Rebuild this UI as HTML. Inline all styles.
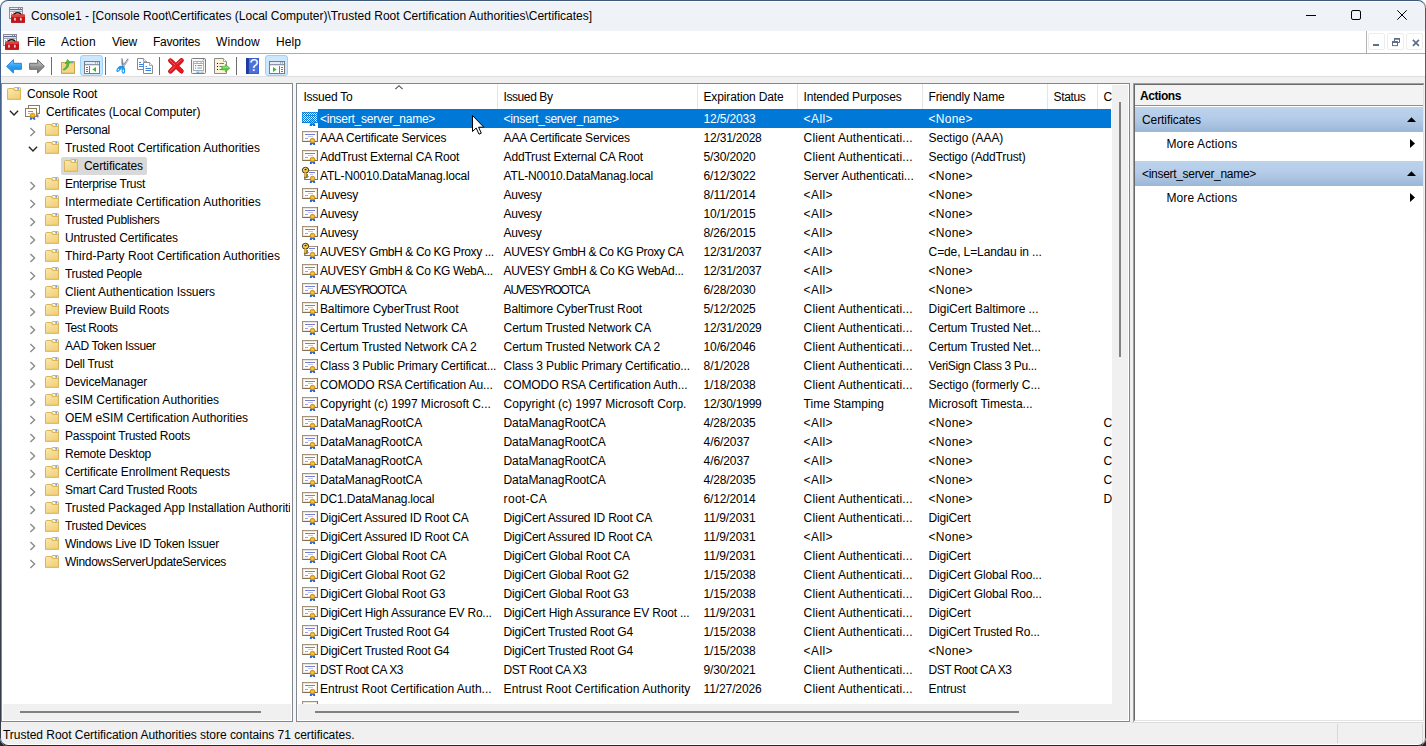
<!DOCTYPE html><html lang="en"><head><meta charset="utf-8"><title>Console1</title><style>
html,body{margin:0;padding:0}
body{width:1426px;height:746px;overflow:hidden;background:#fff;position:relative;font:12px/19px "Liberation Sans",sans-serif;color:#000}
#win{position:absolute;left:0;top:0;width:1426px;height:746px;overflow:hidden;border-radius:8px;background:#f0f0f0}
#frame{position:absolute;left:0;top:0;width:1424px;height:744px;border:1px solid;border-color:#3d5878 #857c7a #26272c #566a8c;border-radius:8px;z-index:50}
.t{position:absolute;white-space:pre;line-height:19px;height:19px}
.i{position:absolute;overflow:visible}
.b{position:absolute}
.w{color:#fff}
</style></head><body>
<div style="position:absolute;left:0;top:700px;width:1426px;height:46px;background:#25272c"></div>
<div id="win">
<div class="b" style="left:0px;top:0px;width:1426px;height:31px;background:#eff3f8;"></div>
<div class="b" style="left:0px;top:1px;width:1426px;height:1px;background:#fafdff;"></div>
<svg class="i" style="left:9px;top:7px" width="16" height="16" viewBox="0 0 16 16" ><rect x="0.5" y="0.5" width="13" height="11" fill="#fff" stroke="#8a8d94"/><path d="M1 1.5 H13" stroke="#e6eaf3"/><rect x="9" y="1" width="1" height="1" fill="#7c89a8"/><rect x="11" y="1" width="1" height="1" fill="#7c89a8"/><path d="M1 2.5 H13" stroke="#5d6d90"/><path d="M1 3.5 H13" stroke="#d9deea"/><path d="M1 4.5 H13" stroke="#a3a8b4"/><path d="M4.5 5 V11" stroke="#8a8d94" stroke-width="0.7"/><rect x="2" y="6" width="1" height="1" fill="#9aa4bd"/><path d="M4.8 9.5 Q4.8 5.8 8.6 5.8 Q12.4 5.8 12.4 9.5" fill="none" stroke="#1c1c1c" stroke-width="1.5"/><rect x="2" y="7.6" width="14" height="8.2" rx="0.9" fill="#c3151a"/><rect x="2" y="7.6" width="14" height="2.4" rx="0.9" fill="#df403b"/><path d="M2.3 15.5 H15.7" stroke="#a30d12" stroke-width="0.6"/><rect x="5.2" y="10.8" width="1.5" height="2.8" fill="#e6e6e6"/><rect x="11.1" y="10.8" width="1.5" height="2.8" fill="#e6e6e6"/></svg>
<span class="t" style="left:31px;top:7px;letter-spacing:-0.007px;">Console1 - [Console Root\Certificates (Local Computer)\Trusted Root Certification Authorities\Certificates]</span>
<svg class="i" style="left:1306px;top:15px" width="10" height="1" viewBox="0 0 10 1" ><rect width="10" height="1" fill="#000"/></svg>
<svg class="i" style="left:1351px;top:10px" width="10" height="10" viewBox="0 0 10 10" ><rect x="0.5" y="0.5" width="9" height="9" rx="1.5" fill="none" stroke="#000"/></svg>
<svg class="i" style="left:1397px;top:10px" width="10" height="10" viewBox="0 0 10 10" ><path d="M0.3 0.3 L9.7 9.7 M9.7 0.3 L0.3 9.7" stroke="#000" stroke-width="1"/></svg>
<div class="b" style="left:0px;top:31px;width:1426px;height:22px;background:#fff;"></div>
<div class="b" style="left:0px;top:53px;width:1426px;height:1px;background:#adadad;"></div>
<svg class="i" style="left:3px;top:34px" width="16" height="16" viewBox="0 0 16 16" ><rect x="0.5" y="0.5" width="13" height="11" fill="#fff" stroke="#8a8d94"/><path d="M1 1.5 H13" stroke="#e6eaf3"/><rect x="9" y="1" width="1" height="1" fill="#7c89a8"/><rect x="11" y="1" width="1" height="1" fill="#7c89a8"/><path d="M1 2.5 H13" stroke="#5d6d90"/><path d="M1 3.5 H13" stroke="#d9deea"/><path d="M1 4.5 H13" stroke="#a3a8b4"/><path d="M4.5 5 V11" stroke="#8a8d94" stroke-width="0.7"/><rect x="2" y="6" width="1" height="1" fill="#9aa4bd"/><path d="M4.8 9.5 Q4.8 5.8 8.6 5.8 Q12.4 5.8 12.4 9.5" fill="none" stroke="#1c1c1c" stroke-width="1.5"/><rect x="2" y="7.6" width="14" height="8.2" rx="0.9" fill="#c3151a"/><rect x="2" y="7.6" width="14" height="2.4" rx="0.9" fill="#df403b"/><path d="M2.3 15.5 H15.7" stroke="#a30d12" stroke-width="0.6"/><rect x="5.2" y="10.8" width="1.5" height="2.8" fill="#e6e6e6"/><rect x="11.1" y="10.8" width="1.5" height="2.8" fill="#e6e6e6"/></svg>
<span class="t" style="left:27px;top:33px;letter-spacing:-0.336px;">File</span>
<span class="t" style="left:61px;top:33px;letter-spacing:0.273px;">Action</span>
<span class="t" style="left:112px;top:33px;letter-spacing:-0.199px;">View</span>
<span class="t" style="left:153px;top:33px;letter-spacing:-0.262px;">Favorites</span>
<span class="t" style="left:216px;top:33px;letter-spacing:0.219px;">Window</span>
<span class="t" style="left:276px;top:33px;letter-spacing:0.078px;">Help</span>
<div class="b" style="left:1366px;top:31px;width:1px;height:22px;background:#b4b4b4;"></div>
<div class="b" style="left:1368px;top:33px;width:15px;height:15px;background:#fff;border:1px solid #ededed;border-radius:2px;"></div>
<div class="b" style="left:1387px;top:33px;width:15px;height:15px;background:#fff;border:1px solid #ededed;border-radius:2px;"></div>
<div class="b" style="left:1406px;top:33px;width:15px;height:15px;background:#fff;border:1px solid #ededed;border-radius:2px;"></div>
<svg class="i" style="left:1373px;top:44px" width="6" height="2" viewBox="0 0 6 2" ><rect width="6" height="2" fill="#5d7089"/></svg>
<svg class="i" style="left:1392px;top:38px" width="9" height="9" viewBox="0 0 9 9" ><path d="M2.5 3 V0.9 H7.5 V4.5 H6" fill="none" stroke="#5d7089" stroke-width="1"/><rect x="2" y="0" width="6" height="1.6" fill="#5d7089"/><rect x="0.5" y="3.6" width="5" height="4" fill="#fff" stroke="#5d7089" stroke-width="1"/><rect x="0" y="3.1" width="6" height="1.9" fill="#5d7089"/></svg>
<svg class="i" style="left:1411.6px;top:38.6px" width="8" height="8" viewBox="0 0 8 8" ><path d="M0.9 0.9 L6.9 6.9 M6.9 0.9 L0.9 6.9" stroke="#5d7089" stroke-width="1.7"/></svg>
<div class="b" style="left:0px;top:54px;width:1426px;height:22px;background:#fff;"></div>
<div class="b" style="left:80px;top:55px;width:21px;height:19px;background:#cce8ff;border:1px solid #99d1ff;border-radius:3px;"></div>
<div class="b" style="left:265px;top:55px;width:21px;height:19px;background:#cce8ff;border:1px solid #99d1ff;border-radius:3px;"></div>
<div class="b" style="left:51px;top:57px;width:1px;height:18px;background:#6d6d6d;"></div>
<div class="b" style="left:105px;top:57px;width:1px;height:18px;background:#6d6d6d;"></div>
<div class="b" style="left:159px;top:57px;width:1px;height:18px;background:#6d6d6d;"></div>
<div class="b" style="left:236px;top:57px;width:1px;height:18px;background:#6d6d6d;"></div>
<svg class="i" style="left:6px;top:58px" width="16" height="16" viewBox="0 0 16 16" ><linearGradient id="gb" x1="0" y1="0" x2="0" y2="1"><stop offset="0" stop-color="#8ad6fb"/><stop offset="0.5" stop-color="#2d9ff2"/><stop offset="1" stop-color="#1c84dc"/></linearGradient><path d="M0.6 8.3 L7.4 1.6 V5.3 H15.4 V11.3 H7.4 V15 Z" fill="url(#gb)" stroke="#2b83d6" stroke-width="1" stroke-linejoin="round"/></svg>
<svg class="i" style="left:29px;top:58px" width="16" height="16" viewBox="0 0 16 16" ><linearGradient id="gg" x1="0" y1="0" x2="0" y2="1"><stop offset="0" stop-color="#c4c4c4"/><stop offset="0.45" stop-color="#a2a2a2"/><stop offset="0.55" stop-color="#8c8c8c"/><stop offset="1" stop-color="#848484"/></linearGradient><path d="M15.4 8.3 L8.6 1.6 V5.3 H0.6 V11.3 H8.6 V15 Z" fill="url(#gg)" stroke="#6c6c6c" stroke-width="1" stroke-linejoin="round"/></svg>
<svg class="i" style="left:60px;top:58px" width="16" height="16" viewBox="0 0 16 16" ><path d="M1.5 4.5 H9 L10 3.5 H14.5 V15.5 H1.5 Z" fill="#f3d78a" stroke="#c9a24c"/><rect x="11" y="4.2" width="2.5" height="1" fill="#4a90e2"/><path d="M2 15 H14" stroke="#d9b45a"/><path d="M3.2 11.2 Q7 9.5 7.2 5.2 L5.2 5.6 L7.6 1.4 L10.6 5 L8.8 5 Q9 10.5 3.8 12.2 Z" fill="#4cc23a" stroke="#2f9a22" stroke-width="0.6" stroke-linejoin="round"/></svg>
<svg class="i" style="left:84px;top:58px" width="16" height="16" viewBox="0 0 16 16" ><rect x="0.5" y="3.5" width="15" height="12" fill="#fff" stroke="#7b7b7b"/><rect x="1" y="4" width="14" height="2" fill="#e8ebf2"/><path d="M1 6.5 H15" stroke="#8e96a8"/><path d="M1 7.5 H15" stroke="#dfe2ea"/><rect x="11" y="4.4" width="1" height="1" fill="#6d7c9c"/><rect x="13" y="4.4" width="1" height="1" fill="#6d7c9c"/><path d="M5.5 8 V15" stroke="#7b7b7b"/><path d="M2 9.5 H4 M2 11.5 H4 M2 13.5 H4" stroke="#3f7fd6"/><path d="M12 9 L8.4 11.5 L12 14 Z" fill="#3fb52d"/></svg>
<svg class="i" style="left:114px;top:58px" width="16" height="16" viewBox="0 0 16 16" ><path d="M7.9 0.3 L10 8.4 L8.7 9.6 L7.8 6 Z" fill="#8d96a0" stroke="#59616a" stroke-width="0.5"/><path d="M13.9 0.6 L14.1 2.2 L9.2 10 L7.7 9.1 Z" fill="#d9dfe6" stroke="#76808a" stroke-width="0.5"/><path d="M13.5 1.2 L9.8 7.2" stroke="#2a2a2a" stroke-width="0.6" stroke-dasharray="0.7 0.9"/><ellipse cx="5" cy="10.9" rx="1.75" ry="3.5" fill="#1e9bf0" transform="rotate(38 5 10.9)"/><ellipse cx="9.3" cy="11.9" rx="1.8" ry="3.9" fill="#1e9bf0" transform="rotate(-4 9.3 11.9)"/><ellipse cx="4.4" cy="11.7" rx="0.55" ry="1.1" fill="#fff" transform="rotate(38 4.4 11.7)"/><ellipse cx="9.3" cy="13" rx="0.6" ry="1.4" fill="#fff" transform="rotate(-4 9.3 13)"/><path d="M6.6 9.2 L8.6 8.4" stroke="#1a7fd0" stroke-width="1.2"/></svg>
<svg class="i" style="left:137px;top:58px" width="16" height="16" viewBox="0 0 16 16" ><path d="M0.5 0.5 H6.5 L9.5 3.5 V11.5 H0.5 Z" fill="#fff" stroke="#8a8a8a"/><path d="M6.5 0.5 V3.5 H9.5" fill="#f4f4f4" stroke="#8a8a8a" stroke-width="0.7"/><path d="M2 4.5 H4 M2 6.5 H6 M2 8.5 H6" stroke="#3f7fd6"/><path d="M6.5 4.5 H12.5 L15.5 7.5 V15.5 H6.5 Z" fill="#fff" stroke="#8a8a8a"/><path d="M12.5 4.5 V7.5 H15.5" fill="#f4f4f4" stroke="#8a8a8a" stroke-width="0.7"/><path d="M8.5 8.5 H10 M8.5 10.5 H14 M8.5 12.5 H14" stroke="#3f7fd6"/></svg>
<svg class="i" style="left:168px;top:58px" width="16" height="16" viewBox="0 0 16 16" ><path d="M2.4 2.6 L13.4 13.2 M13.5 2.4 L2.4 13.3" stroke="#b9090f" stroke-width="4.6" stroke-linecap="round"/><path d="M2.4 2.5 L13.4 13.1 M13.5 2.3 L2.4 13.2" stroke="#e61920" stroke-width="3.5" stroke-linecap="round"/><path d="M1.9 2.1 L7 7 M13 1.8 L9.2 5.6 M6.4 9 L2 13.2" stroke="#f2696c" stroke-width="0.9" stroke-linecap="round"/></svg>
<svg class="i" style="left:191px;top:58px" width="16" height="16" viewBox="0 0 16 16" ><rect x="0.5" y="0.5" width="14" height="15" rx="1" fill="#f7f7f7" stroke="#7d7d7d"/><rect x="2.5" y="3.5" width="10" height="9" fill="#fff" stroke="#a8adbd"/><path d="M2.5 5.5 H12.5" stroke="#a8adbd"/><path d="M6 3.5 V5.5 M10 3.5 V5.5" stroke="#a8adbd"/><rect x="4" y="7" width="1.2" height="1.2" fill="#1e9bf0"/><rect x="4" y="9.6" width="1.2" height="1" fill="#8a8a8a"/><path d="M6.5 7.6 H11 M6.5 10 H11" stroke="#8a8a8a"/><rect x="5.5" y="13.6" width="3" height="1.2" fill="#28b4f0"/><rect x="9.5" y="13.6" width="3" height="1.2" fill="#b8b8b8"/><path d="M12 1.2 L13.2 2.4 M13.2 1.2 L12 2.4" stroke="#4a64a8" stroke-width="0.7"/></svg>
<svg class="i" style="left:214px;top:58px" width="16" height="16" viewBox="0 0 16 16" ><path d="M0.5 0.5 H9.5 L12.5 3.5 V15.5 H0.5 Z" fill="#fbf3d4" stroke="#8a8a8a"/><path d="M9.5 0.5 V3.5 H12.5" fill="#fff" stroke="#8a8a8a" stroke-width="0.7"/><rect x="3" y="5" width="1" height="1" fill="#111"/><rect x="3" y="8" width="1" height="1" fill="#111"/><rect x="3" y="11" width="1" height="1" fill="#111"/><path d="M5.5 5.5 H10 M5.5 8.5 H8 M5.5 11.5 H9" stroke="#6a62b8" stroke-width="0.9"/><path d="M7.8 8.6 H11.4 V6.4 L15.8 10.2 L11.4 14 V11.8 H7.8 Z" fill="#56cc40" stroke="#35a524" stroke-width="0.6" stroke-linejoin="round"/><path d="M8.6 9.6 H12.2 V8.4 L14.2 10.1" stroke="#b6f0a6" stroke-width="0.7" fill="none"/></svg>
<svg class="i" style="left:246px;top:58px" width="13" height="16" viewBox="0 0 13 16" ><rect x="0" y="0" width="13" height="16" fill="#3a5fd0"/><rect x="0" y="0" width="2.8" height="16" fill="#1f3b9c"/><rect x="3" y="1" width="9" height="14" fill="#5b7fe0" opacity="0.55"/></svg>
<svg class="i" style="left:269px;top:58px" width="16" height="16" viewBox="0 0 16 16" ><rect x="0.5" y="3.5" width="15" height="12" fill="#fff" stroke="#7b7b7b"/><rect x="1" y="4" width="14" height="2" fill="#e8ebf2"/><path d="M1 6.5 H15" stroke="#8e96a8"/><path d="M1 7.5 H15" stroke="#dfe2ea"/><rect x="11" y="4.4" width="1" height="1" fill="#6d7c9c"/><rect x="13" y="4.4" width="1" height="1" fill="#6d7c9c"/><path d="M10.5 8 V15" stroke="#7b7b7b"/><path d="M12 9.5 H14 M12 11.5 H14 M12 13.5 H14" stroke="#3f7fd6"/><path d="M4 9 L7.6 11.5 L4 14 Z" fill="#3fb52d"/></svg>
<span class="t w" style="left:249.5px;top:56px;font-size:16px;line-height:19px">?</span>
<div class="b" style="left:0px;top:76px;width:1426px;height:1px;background:#dedede;"></div>
<div class="b" style="left:1px;top:83px;width:290px;height:638px;background:#fff;border:1px solid #828790;border-bottom:none;"></div>
<div class="b" style="left:61px;top:157px;width:86px;height:18px;background:#d9d9d9;border-radius:2px;"></div>
<svg class="i" style="left:7px;top:87px" width="14" height="13" viewBox="0 0 14 13" ><linearGradient id="fg" x1="0" y1="0" x2="0.6" y2="1"><stop offset="0" stop-color="#fbe9ad"/><stop offset="1" stop-color="#f1d07a"/></linearGradient><path d="M0.5 2.5 Q0.5 1.5 1.5 1.5 H6 L7.5 3.5 H13.5 V12.5 H0.5 Z" fill="url(#fg)" stroke="#d8b45c"/><path d="M6.6 1.2 Q7 0.5 8 0.5 H12.6 Q13.5 0.5 13.5 1.5 V3.5 H7.6 Z" fill="#fbeab0" stroke="#d9b55c"/><rect x="8.6" y="1.2" width="3.2" height="1.3" fill="#fff"/><rect x="10.3" y="1.2" width="1.7" height="1.3" fill="#3f8ce0"/><path d="M1 12 H13" stroke="#e8c568" /></svg>
<span class="t" style="left:27px;top:85px;letter-spacing:-0.227px;">Console Root</span>
<svg class="i" style="left:8.899999999999999px;top:108.7px" width="10" height="8" viewBox="0 0 10 8" ><path d="M0.9 1.7 L5 5.9 L9.1 1.7" fill="none" stroke="#262626" stroke-width="1.4"/></svg>
<svg class="i" style="left:25px;top:105.0px" width="16" height="16" viewBox="0 0 16 16" ><rect x="3.5" y="0.5" width="11" height="8" fill="#fff" stroke="#907a5e"/><rect x="0.5" y="3.5" width="11" height="8" fill="#fff" stroke="#907a5e"/><path d="M3 6.5 H8" stroke="#7f87d8"/><path d="M3 8.5 H5" stroke="#a9afe6"/><rect x="12" y="7.6" width="1.3" height="2.2" fill="#e9a617"/><rect x="12.2" y="9.8" width="1.2" height="2.6" fill="#1f63e0"/><path d="M5.3 11.6 L4.9 14.7 H6.6 L7.6 13.2 L8.6 14.7 H10.3 L9.9 11.6 Z" fill="#1f63e0"/><circle cx="7.6" cy="10.5" r="2.4" fill="#e9a617" stroke="#c98a10" stroke-width="0.6"/><path d="M6.6 9.8 L7.6 11 L8.6 9.8" stroke="#fbd75e" stroke-width="0.9" fill="none"/></svg>
<span class="t" style="left:46px;top:103px;letter-spacing:-0.054px;">Certificates (Local Computer)</span>
<svg class="i" style="left:28.5px;top:126.5px" width="8" height="10" viewBox="0 0 8 10" ><path d="M1.4 0.9 L5.6 5 L1.4 9.1" fill="none" stroke="#8b8b8b" stroke-width="1.4"/></svg>
<svg class="i" style="left:45px;top:123px" width="14" height="13" viewBox="0 0 14 13" ><linearGradient id="fg" x1="0" y1="0" x2="0.6" y2="1"><stop offset="0" stop-color="#fbe9ad"/><stop offset="1" stop-color="#f1d07a"/></linearGradient><path d="M0.5 2.5 Q0.5 1.5 1.5 1.5 H6 L7.5 3.5 H13.5 V12.5 H0.5 Z" fill="url(#fg)" stroke="#d8b45c"/><path d="M6.6 1.2 Q7 0.5 8 0.5 H12.6 Q13.5 0.5 13.5 1.5 V3.5 H7.6 Z" fill="#fbeab0" stroke="#d9b55c"/><rect x="8.6" y="1.2" width="3.2" height="1.3" fill="#fff"/><rect x="10.3" y="1.2" width="1.7" height="1.3" fill="#3f8ce0"/><path d="M1 12 H13" stroke="#e8c568" /></svg>
<span class="t" style="left:65px;top:121px;letter-spacing:-0.297px;">Personal</span>
<svg class="i" style="left:27.900000000000002px;top:144.7px" width="10" height="8" viewBox="0 0 10 8" ><path d="M0.9 1.7 L5 5.9 L9.1 1.7" fill="none" stroke="#262626" stroke-width="1.4"/></svg>
<svg class="i" style="left:45px;top:141px" width="14" height="13" viewBox="0 0 14 13" ><linearGradient id="fg" x1="0" y1="0" x2="0.6" y2="1"><stop offset="0" stop-color="#fbe9ad"/><stop offset="1" stop-color="#f1d07a"/></linearGradient><path d="M0.5 2.5 Q0.5 1.5 1.5 1.5 H6 L7.5 3.5 H13.5 V12.5 H0.5 Z" fill="url(#fg)" stroke="#d8b45c"/><path d="M6.6 1.2 Q7 0.5 8 0.5 H12.6 Q13.5 0.5 13.5 1.5 V3.5 H7.6 Z" fill="#fbeab0" stroke="#d9b55c"/><rect x="8.6" y="1.2" width="3.2" height="1.3" fill="#fff"/><rect x="10.3" y="1.2" width="1.7" height="1.3" fill="#3f8ce0"/><path d="M1 12 H13" stroke="#e8c568" /></svg>
<span class="t" style="left:65px;top:139px;">Trusted Root Certification Authorities</span>
<svg class="i" style="left:64px;top:159px" width="14" height="13" viewBox="0 0 14 13" ><linearGradient id="fg" x1="0" y1="0" x2="0.6" y2="1"><stop offset="0" stop-color="#fbe9ad"/><stop offset="1" stop-color="#f1d07a"/></linearGradient><path d="M0.5 2.5 Q0.5 1.5 1.5 1.5 H6 L7.5 3.5 H13.5 V12.5 H0.5 Z" fill="url(#fg)" stroke="#d8b45c"/><path d="M6.6 1.2 Q7 0.5 8 0.5 H12.6 Q13.5 0.5 13.5 1.5 V3.5 H7.6 Z" fill="#fbeab0" stroke="#d9b55c"/><rect x="8.6" y="1.2" width="3.2" height="1.3" fill="#fff"/><rect x="10.3" y="1.2" width="1.7" height="1.3" fill="#3f8ce0"/><path d="M1 12 H13" stroke="#e8c568" /></svg>
<span class="t" style="left:84px;top:157px;letter-spacing:-0.086px;">Certificates</span>
<svg class="i" style="left:28.5px;top:180.5px" width="8" height="10" viewBox="0 0 8 10" ><path d="M1.4 0.9 L5.6 5 L1.4 9.1" fill="none" stroke="#8b8b8b" stroke-width="1.4"/></svg>
<svg class="i" style="left:45px;top:177px" width="14" height="13" viewBox="0 0 14 13" ><linearGradient id="fg" x1="0" y1="0" x2="0.6" y2="1"><stop offset="0" stop-color="#fbe9ad"/><stop offset="1" stop-color="#f1d07a"/></linearGradient><path d="M0.5 2.5 Q0.5 1.5 1.5 1.5 H6 L7.5 3.5 H13.5 V12.5 H0.5 Z" fill="url(#fg)" stroke="#d8b45c"/><path d="M6.6 1.2 Q7 0.5 8 0.5 H12.6 Q13.5 0.5 13.5 1.5 V3.5 H7.6 Z" fill="#fbeab0" stroke="#d9b55c"/><rect x="8.6" y="1.2" width="3.2" height="1.3" fill="#fff"/><rect x="10.3" y="1.2" width="1.7" height="1.3" fill="#3f8ce0"/><path d="M1 12 H13" stroke="#e8c568" /></svg>
<span class="t" style="left:65px;top:175px;letter-spacing:-0.294px;">Enterprise Trust</span>
<svg class="i" style="left:28.5px;top:198.5px" width="8" height="10" viewBox="0 0 8 10" ><path d="M1.4 0.9 L5.6 5 L1.4 9.1" fill="none" stroke="#8b8b8b" stroke-width="1.4"/></svg>
<svg class="i" style="left:45px;top:195px" width="14" height="13" viewBox="0 0 14 13" ><linearGradient id="fg" x1="0" y1="0" x2="0.6" y2="1"><stop offset="0" stop-color="#fbe9ad"/><stop offset="1" stop-color="#f1d07a"/></linearGradient><path d="M0.5 2.5 Q0.5 1.5 1.5 1.5 H6 L7.5 3.5 H13.5 V12.5 H0.5 Z" fill="url(#fg)" stroke="#d8b45c"/><path d="M6.6 1.2 Q7 0.5 8 0.5 H12.6 Q13.5 0.5 13.5 1.5 V3.5 H7.6 Z" fill="#fbeab0" stroke="#d9b55c"/><rect x="8.6" y="1.2" width="3.2" height="1.3" fill="#fff"/><rect x="10.3" y="1.2" width="1.7" height="1.3" fill="#3f8ce0"/><path d="M1 12 H13" stroke="#e8c568" /></svg>
<span class="t" style="left:65px;top:193px;letter-spacing:0.080px;">Intermediate Certification Authorities</span>
<svg class="i" style="left:28.5px;top:216.5px" width="8" height="10" viewBox="0 0 8 10" ><path d="M1.4 0.9 L5.6 5 L1.4 9.1" fill="none" stroke="#8b8b8b" stroke-width="1.4"/></svg>
<svg class="i" style="left:45px;top:213px" width="14" height="13" viewBox="0 0 14 13" ><linearGradient id="fg" x1="0" y1="0" x2="0.6" y2="1"><stop offset="0" stop-color="#fbe9ad"/><stop offset="1" stop-color="#f1d07a"/></linearGradient><path d="M0.5 2.5 Q0.5 1.5 1.5 1.5 H6 L7.5 3.5 H13.5 V12.5 H0.5 Z" fill="url(#fg)" stroke="#d8b45c"/><path d="M6.6 1.2 Q7 0.5 8 0.5 H12.6 Q13.5 0.5 13.5 1.5 V3.5 H7.6 Z" fill="#fbeab0" stroke="#d9b55c"/><rect x="8.6" y="1.2" width="3.2" height="1.3" fill="#fff"/><rect x="10.3" y="1.2" width="1.7" height="1.3" fill="#3f8ce0"/><path d="M1 12 H13" stroke="#e8c568" /></svg>
<span class="t" style="left:65px;top:211px;letter-spacing:-0.284px;">Trusted Publishers</span>
<svg class="i" style="left:28.5px;top:234.5px" width="8" height="10" viewBox="0 0 8 10" ><path d="M1.4 0.9 L5.6 5 L1.4 9.1" fill="none" stroke="#8b8b8b" stroke-width="1.4"/></svg>
<svg class="i" style="left:45px;top:231px" width="14" height="13" viewBox="0 0 14 13" ><linearGradient id="fg" x1="0" y1="0" x2="0.6" y2="1"><stop offset="0" stop-color="#fbe9ad"/><stop offset="1" stop-color="#f1d07a"/></linearGradient><path d="M0.5 2.5 Q0.5 1.5 1.5 1.5 H6 L7.5 3.5 H13.5 V12.5 H0.5 Z" fill="url(#fg)" stroke="#d8b45c"/><path d="M6.6 1.2 Q7 0.5 8 0.5 H12.6 Q13.5 0.5 13.5 1.5 V3.5 H7.6 Z" fill="#fbeab0" stroke="#d9b55c"/><rect x="8.6" y="1.2" width="3.2" height="1.3" fill="#fff"/><rect x="10.3" y="1.2" width="1.7" height="1.3" fill="#3f8ce0"/><path d="M1 12 H13" stroke="#e8c568" /></svg>
<span class="t" style="left:65px;top:229px;letter-spacing:-0.109px;">Untrusted Certificates</span>
<svg class="i" style="left:28.5px;top:252.5px" width="8" height="10" viewBox="0 0 8 10" ><path d="M1.4 0.9 L5.6 5 L1.4 9.1" fill="none" stroke="#8b8b8b" stroke-width="1.4"/></svg>
<svg class="i" style="left:45px;top:249px" width="14" height="13" viewBox="0 0 14 13" ><linearGradient id="fg" x1="0" y1="0" x2="0.6" y2="1"><stop offset="0" stop-color="#fbe9ad"/><stop offset="1" stop-color="#f1d07a"/></linearGradient><path d="M0.5 2.5 Q0.5 1.5 1.5 1.5 H6 L7.5 3.5 H13.5 V12.5 H0.5 Z" fill="url(#fg)" stroke="#d8b45c"/><path d="M6.6 1.2 Q7 0.5 8 0.5 H12.6 Q13.5 0.5 13.5 1.5 V3.5 H7.6 Z" fill="#fbeab0" stroke="#d9b55c"/><rect x="8.6" y="1.2" width="3.2" height="1.3" fill="#fff"/><rect x="10.3" y="1.2" width="1.7" height="1.3" fill="#3f8ce0"/><path d="M1 12 H13" stroke="#e8c568" /></svg>
<span class="t" style="left:65px;top:247px;letter-spacing:0.022px;">Third-Party Root Certification Authorities</span>
<svg class="i" style="left:28.5px;top:270.5px" width="8" height="10" viewBox="0 0 8 10" ><path d="M1.4 0.9 L5.6 5 L1.4 9.1" fill="none" stroke="#8b8b8b" stroke-width="1.4"/></svg>
<svg class="i" style="left:45px;top:267px" width="14" height="13" viewBox="0 0 14 13" ><linearGradient id="fg" x1="0" y1="0" x2="0.6" y2="1"><stop offset="0" stop-color="#fbe9ad"/><stop offset="1" stop-color="#f1d07a"/></linearGradient><path d="M0.5 2.5 Q0.5 1.5 1.5 1.5 H6 L7.5 3.5 H13.5 V12.5 H0.5 Z" fill="url(#fg)" stroke="#d8b45c"/><path d="M6.6 1.2 Q7 0.5 8 0.5 H12.6 Q13.5 0.5 13.5 1.5 V3.5 H7.6 Z" fill="#fbeab0" stroke="#d9b55c"/><rect x="8.6" y="1.2" width="3.2" height="1.3" fill="#fff"/><rect x="10.3" y="1.2" width="1.7" height="1.3" fill="#3f8ce0"/><path d="M1 12 H13" stroke="#e8c568" /></svg>
<span class="t" style="left:65px;top:265px;letter-spacing:-0.296px;">Trusted People</span>
<svg class="i" style="left:28.5px;top:288.5px" width="8" height="10" viewBox="0 0 8 10" ><path d="M1.4 0.9 L5.6 5 L1.4 9.1" fill="none" stroke="#8b8b8b" stroke-width="1.4"/></svg>
<svg class="i" style="left:45px;top:285px" width="14" height="13" viewBox="0 0 14 13" ><linearGradient id="fg" x1="0" y1="0" x2="0.6" y2="1"><stop offset="0" stop-color="#fbe9ad"/><stop offset="1" stop-color="#f1d07a"/></linearGradient><path d="M0.5 2.5 Q0.5 1.5 1.5 1.5 H6 L7.5 3.5 H13.5 V12.5 H0.5 Z" fill="url(#fg)" stroke="#d8b45c"/><path d="M6.6 1.2 Q7 0.5 8 0.5 H12.6 Q13.5 0.5 13.5 1.5 V3.5 H7.6 Z" fill="#fbeab0" stroke="#d9b55c"/><rect x="8.6" y="1.2" width="3.2" height="1.3" fill="#fff"/><rect x="10.3" y="1.2" width="1.7" height="1.3" fill="#3f8ce0"/><path d="M1 12 H13" stroke="#e8c568" /></svg>
<span class="t" style="left:65px;top:283px;letter-spacing:-0.049px;">Client Authentication Issuers</span>
<svg class="i" style="left:28.5px;top:306.5px" width="8" height="10" viewBox="0 0 8 10" ><path d="M1.4 0.9 L5.6 5 L1.4 9.1" fill="none" stroke="#8b8b8b" stroke-width="1.4"/></svg>
<svg class="i" style="left:45px;top:303px" width="14" height="13" viewBox="0 0 14 13" ><linearGradient id="fg" x1="0" y1="0" x2="0.6" y2="1"><stop offset="0" stop-color="#fbe9ad"/><stop offset="1" stop-color="#f1d07a"/></linearGradient><path d="M0.5 2.5 Q0.5 1.5 1.5 1.5 H6 L7.5 3.5 H13.5 V12.5 H0.5 Z" fill="url(#fg)" stroke="#d8b45c"/><path d="M6.6 1.2 Q7 0.5 8 0.5 H12.6 Q13.5 0.5 13.5 1.5 V3.5 H7.6 Z" fill="#fbeab0" stroke="#d9b55c"/><rect x="8.6" y="1.2" width="3.2" height="1.3" fill="#fff"/><rect x="10.3" y="1.2" width="1.7" height="1.3" fill="#3f8ce0"/><path d="M1 12 H13" stroke="#e8c568" /></svg>
<span class="t" style="left:65px;top:301px;letter-spacing:-0.178px;">Preview Build Roots</span>
<svg class="i" style="left:28.5px;top:324.5px" width="8" height="10" viewBox="0 0 8 10" ><path d="M1.4 0.9 L5.6 5 L1.4 9.1" fill="none" stroke="#8b8b8b" stroke-width="1.4"/></svg>
<svg class="i" style="left:45px;top:321px" width="14" height="13" viewBox="0 0 14 13" ><linearGradient id="fg" x1="0" y1="0" x2="0.6" y2="1"><stop offset="0" stop-color="#fbe9ad"/><stop offset="1" stop-color="#f1d07a"/></linearGradient><path d="M0.5 2.5 Q0.5 1.5 1.5 1.5 H6 L7.5 3.5 H13.5 V12.5 H0.5 Z" fill="url(#fg)" stroke="#d8b45c"/><path d="M6.6 1.2 Q7 0.5 8 0.5 H12.6 Q13.5 0.5 13.5 1.5 V3.5 H7.6 Z" fill="#fbeab0" stroke="#d9b55c"/><rect x="8.6" y="1.2" width="3.2" height="1.3" fill="#fff"/><rect x="10.3" y="1.2" width="1.7" height="1.3" fill="#3f8ce0"/><path d="M1 12 H13" stroke="#e8c568" /></svg>
<span class="t" style="left:65px;top:319px;letter-spacing:-0.400px;">Test Roots</span>
<svg class="i" style="left:28.5px;top:342.5px" width="8" height="10" viewBox="0 0 8 10" ><path d="M1.4 0.9 L5.6 5 L1.4 9.1" fill="none" stroke="#8b8b8b" stroke-width="1.4"/></svg>
<svg class="i" style="left:45px;top:339px" width="14" height="13" viewBox="0 0 14 13" ><linearGradient id="fg" x1="0" y1="0" x2="0.6" y2="1"><stop offset="0" stop-color="#fbe9ad"/><stop offset="1" stop-color="#f1d07a"/></linearGradient><path d="M0.5 2.5 Q0.5 1.5 1.5 1.5 H6 L7.5 3.5 H13.5 V12.5 H0.5 Z" fill="url(#fg)" stroke="#d8b45c"/><path d="M6.6 1.2 Q7 0.5 8 0.5 H12.6 Q13.5 0.5 13.5 1.5 V3.5 H7.6 Z" fill="#fbeab0" stroke="#d9b55c"/><rect x="8.6" y="1.2" width="3.2" height="1.3" fill="#fff"/><rect x="10.3" y="1.2" width="1.7" height="1.3" fill="#3f8ce0"/><path d="M1 12 H13" stroke="#e8c568" /></svg>
<span class="t" style="left:65px;top:337px;letter-spacing:-0.314px;">AAD Token Issuer</span>
<svg class="i" style="left:28.5px;top:360.5px" width="8" height="10" viewBox="0 0 8 10" ><path d="M1.4 0.9 L5.6 5 L1.4 9.1" fill="none" stroke="#8b8b8b" stroke-width="1.4"/></svg>
<svg class="i" style="left:45px;top:357px" width="14" height="13" viewBox="0 0 14 13" ><linearGradient id="fg" x1="0" y1="0" x2="0.6" y2="1"><stop offset="0" stop-color="#fbe9ad"/><stop offset="1" stop-color="#f1d07a"/></linearGradient><path d="M0.5 2.5 Q0.5 1.5 1.5 1.5 H6 L7.5 3.5 H13.5 V12.5 H0.5 Z" fill="url(#fg)" stroke="#d8b45c"/><path d="M6.6 1.2 Q7 0.5 8 0.5 H12.6 Q13.5 0.5 13.5 1.5 V3.5 H7.6 Z" fill="#fbeab0" stroke="#d9b55c"/><rect x="8.6" y="1.2" width="3.2" height="1.3" fill="#fff"/><rect x="10.3" y="1.2" width="1.7" height="1.3" fill="#3f8ce0"/><path d="M1 12 H13" stroke="#e8c568" /></svg>
<span class="t" style="left:65px;top:355px;letter-spacing:-0.269px;">Dell Trust</span>
<svg class="i" style="left:28.5px;top:378.5px" width="8" height="10" viewBox="0 0 8 10" ><path d="M1.4 0.9 L5.6 5 L1.4 9.1" fill="none" stroke="#8b8b8b" stroke-width="1.4"/></svg>
<svg class="i" style="left:45px;top:375px" width="14" height="13" viewBox="0 0 14 13" ><linearGradient id="fg" x1="0" y1="0" x2="0.6" y2="1"><stop offset="0" stop-color="#fbe9ad"/><stop offset="1" stop-color="#f1d07a"/></linearGradient><path d="M0.5 2.5 Q0.5 1.5 1.5 1.5 H6 L7.5 3.5 H13.5 V12.5 H0.5 Z" fill="url(#fg)" stroke="#d8b45c"/><path d="M6.6 1.2 Q7 0.5 8 0.5 H12.6 Q13.5 0.5 13.5 1.5 V3.5 H7.6 Z" fill="#fbeab0" stroke="#d9b55c"/><rect x="8.6" y="1.2" width="3.2" height="1.3" fill="#fff"/><rect x="10.3" y="1.2" width="1.7" height="1.3" fill="#3f8ce0"/><path d="M1 12 H13" stroke="#e8c568" /></svg>
<span class="t" style="left:65px;top:373px;letter-spacing:-0.157px;">DeviceManager</span>
<svg class="i" style="left:28.5px;top:396.5px" width="8" height="10" viewBox="0 0 8 10" ><path d="M1.4 0.9 L5.6 5 L1.4 9.1" fill="none" stroke="#8b8b8b" stroke-width="1.4"/></svg>
<svg class="i" style="left:45px;top:393px" width="14" height="13" viewBox="0 0 14 13" ><linearGradient id="fg" x1="0" y1="0" x2="0.6" y2="1"><stop offset="0" stop-color="#fbe9ad"/><stop offset="1" stop-color="#f1d07a"/></linearGradient><path d="M0.5 2.5 Q0.5 1.5 1.5 1.5 H6 L7.5 3.5 H13.5 V12.5 H0.5 Z" fill="url(#fg)" stroke="#d8b45c"/><path d="M6.6 1.2 Q7 0.5 8 0.5 H12.6 Q13.5 0.5 13.5 1.5 V3.5 H7.6 Z" fill="#fbeab0" stroke="#d9b55c"/><rect x="8.6" y="1.2" width="3.2" height="1.3" fill="#fff"/><rect x="10.3" y="1.2" width="1.7" height="1.3" fill="#3f8ce0"/><path d="M1 12 H13" stroke="#e8c568" /></svg>
<span class="t" style="left:65px;top:391px;">eSIM Certification Authorities</span>
<svg class="i" style="left:28.5px;top:414.5px" width="8" height="10" viewBox="0 0 8 10" ><path d="M1.4 0.9 L5.6 5 L1.4 9.1" fill="none" stroke="#8b8b8b" stroke-width="1.4"/></svg>
<svg class="i" style="left:45px;top:411px" width="14" height="13" viewBox="0 0 14 13" ><linearGradient id="fg" x1="0" y1="0" x2="0.6" y2="1"><stop offset="0" stop-color="#fbe9ad"/><stop offset="1" stop-color="#f1d07a"/></linearGradient><path d="M0.5 2.5 Q0.5 1.5 1.5 1.5 H6 L7.5 3.5 H13.5 V12.5 H0.5 Z" fill="url(#fg)" stroke="#d8b45c"/><path d="M6.6 1.2 Q7 0.5 8 0.5 H12.6 Q13.5 0.5 13.5 1.5 V3.5 H7.6 Z" fill="#fbeab0" stroke="#d9b55c"/><rect x="8.6" y="1.2" width="3.2" height="1.3" fill="#fff"/><rect x="10.3" y="1.2" width="1.7" height="1.3" fill="#3f8ce0"/><path d="M1 12 H13" stroke="#e8c568" /></svg>
<span class="t" style="left:65px;top:409px;letter-spacing:-0.051px;">OEM eSIM Certification Authorities</span>
<svg class="i" style="left:28.5px;top:432.5px" width="8" height="10" viewBox="0 0 8 10" ><path d="M1.4 0.9 L5.6 5 L1.4 9.1" fill="none" stroke="#8b8b8b" stroke-width="1.4"/></svg>
<svg class="i" style="left:45px;top:429px" width="14" height="13" viewBox="0 0 14 13" ><linearGradient id="fg" x1="0" y1="0" x2="0.6" y2="1"><stop offset="0" stop-color="#fbe9ad"/><stop offset="1" stop-color="#f1d07a"/></linearGradient><path d="M0.5 2.5 Q0.5 1.5 1.5 1.5 H6 L7.5 3.5 H13.5 V12.5 H0.5 Z" fill="url(#fg)" stroke="#d8b45c"/><path d="M6.6 1.2 Q7 0.5 8 0.5 H12.6 Q13.5 0.5 13.5 1.5 V3.5 H7.6 Z" fill="#fbeab0" stroke="#d9b55c"/><rect x="8.6" y="1.2" width="3.2" height="1.3" fill="#fff"/><rect x="10.3" y="1.2" width="1.7" height="1.3" fill="#3f8ce0"/><path d="M1 12 H13" stroke="#e8c568" /></svg>
<span class="t" style="left:65px;top:427px;letter-spacing:-0.254px;">Passpoint Trusted Roots</span>
<svg class="i" style="left:28.5px;top:450.5px" width="8" height="10" viewBox="0 0 8 10" ><path d="M1.4 0.9 L5.6 5 L1.4 9.1" fill="none" stroke="#8b8b8b" stroke-width="1.4"/></svg>
<svg class="i" style="left:45px;top:447px" width="14" height="13" viewBox="0 0 14 13" ><linearGradient id="fg" x1="0" y1="0" x2="0.6" y2="1"><stop offset="0" stop-color="#fbe9ad"/><stop offset="1" stop-color="#f1d07a"/></linearGradient><path d="M0.5 2.5 Q0.5 1.5 1.5 1.5 H6 L7.5 3.5 H13.5 V12.5 H0.5 Z" fill="url(#fg)" stroke="#d8b45c"/><path d="M6.6 1.2 Q7 0.5 8 0.5 H12.6 Q13.5 0.5 13.5 1.5 V3.5 H7.6 Z" fill="#fbeab0" stroke="#d9b55c"/><rect x="8.6" y="1.2" width="3.2" height="1.3" fill="#fff"/><rect x="10.3" y="1.2" width="1.7" height="1.3" fill="#3f8ce0"/><path d="M1 12 H13" stroke="#e8c568" /></svg>
<span class="t" style="left:65px;top:445px;letter-spacing:-0.241px;">Remote Desktop</span>
<svg class="i" style="left:28.5px;top:468.5px" width="8" height="10" viewBox="0 0 8 10" ><path d="M1.4 0.9 L5.6 5 L1.4 9.1" fill="none" stroke="#8b8b8b" stroke-width="1.4"/></svg>
<svg class="i" style="left:45px;top:465px" width="14" height="13" viewBox="0 0 14 13" ><linearGradient id="fg" x1="0" y1="0" x2="0.6" y2="1"><stop offset="0" stop-color="#fbe9ad"/><stop offset="1" stop-color="#f1d07a"/></linearGradient><path d="M0.5 2.5 Q0.5 1.5 1.5 1.5 H6 L7.5 3.5 H13.5 V12.5 H0.5 Z" fill="url(#fg)" stroke="#d8b45c"/><path d="M6.6 1.2 Q7 0.5 8 0.5 H12.6 Q13.5 0.5 13.5 1.5 V3.5 H7.6 Z" fill="#fbeab0" stroke="#d9b55c"/><rect x="8.6" y="1.2" width="3.2" height="1.3" fill="#fff"/><rect x="10.3" y="1.2" width="1.7" height="1.3" fill="#3f8ce0"/><path d="M1 12 H13" stroke="#e8c568" /></svg>
<span class="t" style="left:65px;top:463px;letter-spacing:-0.127px;">Certificate Enrollment Requests</span>
<svg class="i" style="left:28.5px;top:486.5px" width="8" height="10" viewBox="0 0 8 10" ><path d="M1.4 0.9 L5.6 5 L1.4 9.1" fill="none" stroke="#8b8b8b" stroke-width="1.4"/></svg>
<svg class="i" style="left:45px;top:483px" width="14" height="13" viewBox="0 0 14 13" ><linearGradient id="fg" x1="0" y1="0" x2="0.6" y2="1"><stop offset="0" stop-color="#fbe9ad"/><stop offset="1" stop-color="#f1d07a"/></linearGradient><path d="M0.5 2.5 Q0.5 1.5 1.5 1.5 H6 L7.5 3.5 H13.5 V12.5 H0.5 Z" fill="url(#fg)" stroke="#d8b45c"/><path d="M6.6 1.2 Q7 0.5 8 0.5 H12.6 Q13.5 0.5 13.5 1.5 V3.5 H7.6 Z" fill="#fbeab0" stroke="#d9b55c"/><rect x="8.6" y="1.2" width="3.2" height="1.3" fill="#fff"/><rect x="10.3" y="1.2" width="1.7" height="1.3" fill="#3f8ce0"/><path d="M1 12 H13" stroke="#e8c568" /></svg>
<span class="t" style="left:65px;top:481px;letter-spacing:-0.308px;">Smart Card Trusted Roots</span>
<svg class="i" style="left:28.5px;top:504.5px" width="8" height="10" viewBox="0 0 8 10" ><path d="M1.4 0.9 L5.6 5 L1.4 9.1" fill="none" stroke="#8b8b8b" stroke-width="1.4"/></svg>
<svg class="i" style="left:45px;top:501px" width="14" height="13" viewBox="0 0 14 13" ><linearGradient id="fg" x1="0" y1="0" x2="0.6" y2="1"><stop offset="0" stop-color="#fbe9ad"/><stop offset="1" stop-color="#f1d07a"/></linearGradient><path d="M0.5 2.5 Q0.5 1.5 1.5 1.5 H6 L7.5 3.5 H13.5 V12.5 H0.5 Z" fill="url(#fg)" stroke="#d8b45c"/><path d="M6.6 1.2 Q7 0.5 8 0.5 H12.6 Q13.5 0.5 13.5 1.5 V3.5 H7.6 Z" fill="#fbeab0" stroke="#d9b55c"/><rect x="8.6" y="1.2" width="3.2" height="1.3" fill="#fff"/><rect x="10.3" y="1.2" width="1.7" height="1.3" fill="#3f8ce0"/><path d="M1 12 H13" stroke="#e8c568" /></svg>
<span class="t" style="left:65px;top:499px;letter-spacing:-0.057px;width:224.8px;overflow:hidden;">Trusted Packaged App Installation Authorities</span>
<svg class="i" style="left:28.5px;top:522.5px" width="8" height="10" viewBox="0 0 8 10" ><path d="M1.4 0.9 L5.6 5 L1.4 9.1" fill="none" stroke="#8b8b8b" stroke-width="1.4"/></svg>
<svg class="i" style="left:45px;top:519px" width="14" height="13" viewBox="0 0 14 13" ><linearGradient id="fg" x1="0" y1="0" x2="0.6" y2="1"><stop offset="0" stop-color="#fbe9ad"/><stop offset="1" stop-color="#f1d07a"/></linearGradient><path d="M0.5 2.5 Q0.5 1.5 1.5 1.5 H6 L7.5 3.5 H13.5 V12.5 H0.5 Z" fill="url(#fg)" stroke="#d8b45c"/><path d="M6.6 1.2 Q7 0.5 8 0.5 H12.6 Q13.5 0.5 13.5 1.5 V3.5 H7.6 Z" fill="#fbeab0" stroke="#d9b55c"/><rect x="8.6" y="1.2" width="3.2" height="1.3" fill="#fff"/><rect x="10.3" y="1.2" width="1.7" height="1.3" fill="#3f8ce0"/><path d="M1 12 H13" stroke="#e8c568" /></svg>
<span class="t" style="left:65px;top:517px;letter-spacing:-0.363px;">Trusted Devices</span>
<svg class="i" style="left:28.5px;top:540.5px" width="8" height="10" viewBox="0 0 8 10" ><path d="M1.4 0.9 L5.6 5 L1.4 9.1" fill="none" stroke="#8b8b8b" stroke-width="1.4"/></svg>
<svg class="i" style="left:45px;top:537px" width="14" height="13" viewBox="0 0 14 13" ><linearGradient id="fg" x1="0" y1="0" x2="0.6" y2="1"><stop offset="0" stop-color="#fbe9ad"/><stop offset="1" stop-color="#f1d07a"/></linearGradient><path d="M0.5 2.5 Q0.5 1.5 1.5 1.5 H6 L7.5 3.5 H13.5 V12.5 H0.5 Z" fill="url(#fg)" stroke="#d8b45c"/><path d="M6.6 1.2 Q7 0.5 8 0.5 H12.6 Q13.5 0.5 13.5 1.5 V3.5 H7.6 Z" fill="#fbeab0" stroke="#d9b55c"/><rect x="8.6" y="1.2" width="3.2" height="1.3" fill="#fff"/><rect x="10.3" y="1.2" width="1.7" height="1.3" fill="#3f8ce0"/><path d="M1 12 H13" stroke="#e8c568" /></svg>
<span class="t" style="left:65px;top:535px;letter-spacing:-0.236px;">Windows Live ID Token Issuer</span>
<svg class="i" style="left:28.5px;top:558.5px" width="8" height="10" viewBox="0 0 8 10" ><path d="M1.4 0.9 L5.6 5 L1.4 9.1" fill="none" stroke="#8b8b8b" stroke-width="1.4"/></svg>
<svg class="i" style="left:45px;top:555px" width="14" height="13" viewBox="0 0 14 13" ><linearGradient id="fg" x1="0" y1="0" x2="0.6" y2="1"><stop offset="0" stop-color="#fbe9ad"/><stop offset="1" stop-color="#f1d07a"/></linearGradient><path d="M0.5 2.5 Q0.5 1.5 1.5 1.5 H6 L7.5 3.5 H13.5 V12.5 H0.5 Z" fill="url(#fg)" stroke="#d8b45c"/><path d="M6.6 1.2 Q7 0.5 8 0.5 H12.6 Q13.5 0.5 13.5 1.5 V3.5 H7.6 Z" fill="#fbeab0" stroke="#d9b55c"/><rect x="8.6" y="1.2" width="3.2" height="1.3" fill="#fff"/><rect x="10.3" y="1.2" width="1.7" height="1.3" fill="#3f8ce0"/><path d="M1 12 H13" stroke="#e8c568" /></svg>
<span class="t" style="left:65px;top:553px;letter-spacing:-0.286px;">WindowsServerUpdateServices</span>
<div class="b" style="left:3px;top:704px;width:288px;height:16px;background:#f0f0f0;"></div>
<div class="b" style="left:20px;top:711px;width:241px;height:2px;background:#808080;"></div>
<div class="b" style="left:293px;top:83px;width:3px;height:639px;background:#f7f7f7;"></div>
<div class="b" style="left:296px;top:83px;width:832px;height:638px;background:#fff;border:1px solid #828790;border-bottom:none;"></div>
<div class="b" style="left:497px;top:84px;width:1px;height:25px;background:#e5e5e5;"></div>
<div class="b" style="left:697px;top:84px;width:1px;height:25px;background:#e5e5e5;"></div>
<div class="b" style="left:797px;top:84px;width:1px;height:25px;background:#e5e5e5;"></div>
<div class="b" style="left:922px;top:84px;width:1px;height:25px;background:#e5e5e5;"></div>
<div class="b" style="left:1047px;top:84px;width:1px;height:25px;background:#e5e5e5;"></div>
<div class="b" style="left:1097px;top:84px;width:1px;height:25px;background:#e5e5e5;"></div>
<span class="t" style="left:303.5px;top:88px;letter-spacing:-0.240px;">Issued To</span>
<span class="t" style="left:503.5px;top:88px;letter-spacing:-0.411px;">Issued By</span>
<span class="t" style="left:703.5px;top:88px;letter-spacing:-0.136px;">Expiration Date</span>
<span class="t" style="left:803.5px;top:88px;letter-spacing:-0.162px;">Intended Purposes</span>
<span class="t" style="left:928.5px;top:88px;letter-spacing:-0.156px;">Friendly Name</span>
<span class="t" style="left:1053.5px;top:88px;letter-spacing:-0.339px;">Status</span>
<span class="t" style="left:1103.5px;top:88px;">C</span>
<svg class="i" style="left:394.8px;top:85px" width="8" height="5" viewBox="0 0 8 5" ><path d="M0.4 4.2 L4 0.7 L7.6 4.2" fill="none" stroke="#505050" stroke-width="1.15"/></svg>
<div class="b" style="left:318px;top:109px;width:793px;height:19px;background:#0078d7;"></div>
<svg class="i" style="left:302px;top:112px" width="16" height="14" viewBox="0 0 16 14" ><rect x="0.5" y="0.5" width="15" height="10" fill="#fff" stroke="#86714f"/><path d="M0.5 10.5 V0.5 H15" stroke="#a5937a" fill="none"/><rect x="1.5" y="1.5" width="13" height="8" fill="none" stroke="#ece6dc"/><path d="M3 3.5 H13" stroke="#757dd2" /><path d="M6 5.5 H11" stroke="#c3c7ee"/><path d="M3 7.5 H6" stroke="#9aa1e0"/><path d="M8.1 11.4 L7.8 14.1 H9.5 L10.5 12.8 L11.5 14.1 H13.2 L12.9 11.4 Z" fill="#1f63e0"/><circle cx="10.5" cy="9.6" r="2.35" fill="#efb224" stroke="#c4820c" stroke-width="0.8"/><path d="M9.4 8.8 L10.5 10.1 L11.6 8.8" stroke="#fbd75e" stroke-width="0.9" fill="none"/><defs><pattern id="chk" width="2" height="2" patternUnits="userSpaceOnUse"><rect x="0" y="0" width="1" height="1" fill="#0078d7"/><rect x="1" y="1" width="1" height="1" fill="#0078d7"/></pattern><mask id="cm"><rect x="0" y="0" width="16" height="11" fill="#fff"/><circle cx="10.5" cy="9.7" r="3" fill="#fff"/><path d="M8 11 L7.7 14.2 H13.3 L13 11 Z" fill="#fff"/></mask></defs><rect x="0" y="0" width="16" height="14" fill="url(#chk)" mask="url(#cm)" shape-rendering="crispEdges"/></svg>
<span class="t" style="left:320px;top:110px;letter-spacing:-0.247px;color:#fff;">&lt;insert_server_name&gt;</span>
<span class="t" style="left:503.6px;top:110px;letter-spacing:-0.247px;color:#fff;">&lt;insert_server_name&gt;</span>
<span class="t" style="left:703.6px;top:110px;letter-spacing:-0.155px;color:#fff;">12/5/2033</span>
<span class="t" style="left:803.6px;top:110px;letter-spacing:0.388px;color:#fff;">&lt;All&gt;</span>
<span class="t" style="left:928.6px;top:110px;letter-spacing:0.249px;color:#fff;">&lt;None&gt;</span>
<svg class="i" style="left:302px;top:131px" width="16" height="14" viewBox="0 0 16 14" ><rect x="0.5" y="0.5" width="15" height="10" fill="#fff" stroke="#86714f"/><path d="M0.5 10.5 V0.5 H15" stroke="#a5937a" fill="none"/><rect x="1.5" y="1.5" width="13" height="8" fill="none" stroke="#ece6dc"/><path d="M3 3.5 H13" stroke="#757dd2" /><path d="M6 5.5 H11" stroke="#c3c7ee"/><path d="M3 7.5 H6" stroke="#9aa1e0"/><path d="M8.1 11.4 L7.8 14.1 H9.5 L10.5 12.8 L11.5 14.1 H13.2 L12.9 11.4 Z" fill="#1f63e0"/><circle cx="10.5" cy="9.6" r="2.35" fill="#efb224" stroke="#c4820c" stroke-width="0.8"/><path d="M9.4 8.8 L10.5 10.1 L11.6 8.8" stroke="#fbd75e" stroke-width="0.9" fill="none"/></svg>
<span class="t" style="left:320px;top:129px;letter-spacing:-0.159px;">AAA Certificate Services</span>
<span class="t" style="left:503.6px;top:129px;letter-spacing:-0.159px;">AAA Certificate Services</span>
<span class="t" style="left:703.6px;top:129px;letter-spacing:-0.206px;">12/31/2028</span>
<span class="t" style="left:803.6px;top:129px;letter-spacing:0.137px;">Client Authenticati...</span>
<span class="t" style="left:928.6px;top:129px;letter-spacing:-0.049px;">Sectigo (AAA)</span>
<svg class="i" style="left:302px;top:150px" width="16" height="14" viewBox="0 0 16 14" ><rect x="0.5" y="0.5" width="15" height="10" fill="#fff" stroke="#86714f"/><path d="M0.5 10.5 V0.5 H15" stroke="#a5937a" fill="none"/><rect x="1.5" y="1.5" width="13" height="8" fill="none" stroke="#ece6dc"/><path d="M3 3.5 H13" stroke="#757dd2" /><path d="M6 5.5 H11" stroke="#c3c7ee"/><path d="M3 7.5 H6" stroke="#9aa1e0"/><path d="M8.1 11.4 L7.8 14.1 H9.5 L10.5 12.8 L11.5 14.1 H13.2 L12.9 11.4 Z" fill="#1f63e0"/><circle cx="10.5" cy="9.6" r="2.35" fill="#efb224" stroke="#c4820c" stroke-width="0.8"/><path d="M9.4 8.8 L10.5 10.1 L11.6 8.8" stroke="#fbd75e" stroke-width="0.9" fill="none"/></svg>
<span class="t" style="left:320px;top:148px;letter-spacing:-0.177px;">AddTrust External CA Root</span>
<span class="t" style="left:503.6px;top:148px;letter-spacing:-0.177px;">AddTrust External CA Root</span>
<span class="t" style="left:703.6px;top:148px;letter-spacing:-0.155px;">5/30/2020</span>
<span class="t" style="left:803.6px;top:148px;letter-spacing:0.137px;">Client Authenticati...</span>
<span class="t" style="left:928.6px;top:148px;letter-spacing:-0.145px;">Sectigo (AddTrust)</span>
<svg class="i" style="left:302px;top:167px" width="16" height="16" viewBox="0 0 16 16" ><rect x="2.5" y="3.5" width="13" height="9" fill="#fff" stroke="#86714f"/><path d="M2.5 12.5 V3.5 H15" stroke="#a5937a" fill="none"/><path d="M7 5.5 H13" stroke="#757dd2" /><path d="M8 7.5 H11" stroke="#c3c7ee"/><path d="M5.5 9.5 H7" stroke="#9aa1e0"/><path d="M8.1 13.4 L7.8 16.1 H9.5 L10.5 14.8 L11.5 16.1 H13.2 L12.9 13.4 Z" fill="#1f63e0"/><circle cx="10.5" cy="11.6" r="2.35" fill="#efb224" stroke="#c4820c" stroke-width="0.8"/><path d="M9.4 10.8 L10.5 12.1 L11.6 10.8" stroke="#fbd75e" stroke-width="0.9" fill="none"/><path d="M3.3 5.4 V10.4 M3.3 8 H5 M3.3 10 H4.8" stroke="#6b5320" stroke-width="2.1" fill="none" stroke-linecap="round"/><ellipse cx="3.5" cy="3.2" rx="3.2" ry="2.9" fill="#f3c84b" stroke="#2c210c" stroke-width="0.9"/><ellipse cx="3.5" cy="2.5" rx="1.1" ry="0.8" fill="#2c210c"/><path d="M3.3 5.6 V10.2 M3.3 8 H4.8 M3.3 9.9 H4.6" stroke="#e8ae24" stroke-width="1.4" fill="none"/><path d="M2.8 5.8 V9.6" stroke="#fbe6a0" stroke-width="0.6"/><path d="M1.6 2.6 Q2.2 1.2 3.6 1.1" stroke="#fff3c4" stroke-width="0.7" fill="none"/></svg>
<span class="t" style="left:320px;top:167px;letter-spacing:-0.175px;">ATL-N0010.DataManag.local</span>
<span class="t" style="left:503.6px;top:167px;letter-spacing:-0.175px;">ATL-N0010.DataManag.local</span>
<span class="t" style="left:703.6px;top:167px;letter-spacing:-0.155px;">6/12/3022</span>
<span class="t" style="left:803.6px;top:167px;letter-spacing:-0.029px;">Server Authenticati...</span>
<span class="t" style="left:928.6px;top:167px;letter-spacing:0.249px;">&lt;None&gt;</span>
<svg class="i" style="left:302px;top:188px" width="16" height="14" viewBox="0 0 16 14" ><rect x="0.5" y="0.5" width="15" height="10" fill="#fff" stroke="#86714f"/><path d="M0.5 10.5 V0.5 H15" stroke="#a5937a" fill="none"/><rect x="1.5" y="1.5" width="13" height="8" fill="none" stroke="#ece6dc"/><path d="M3 3.5 H13" stroke="#757dd2" /><path d="M6 5.5 H11" stroke="#c3c7ee"/><path d="M3 7.5 H6" stroke="#9aa1e0"/><path d="M8.1 11.4 L7.8 14.1 H9.5 L10.5 12.8 L11.5 14.1 H13.2 L12.9 11.4 Z" fill="#1f63e0"/><circle cx="10.5" cy="9.6" r="2.35" fill="#efb224" stroke="#c4820c" stroke-width="0.8"/><path d="M9.4 8.8 L10.5 10.1 L11.6 8.8" stroke="#fbd75e" stroke-width="0.9" fill="none"/></svg>
<span class="t" style="left:320px;top:186px;letter-spacing:-0.227px;">Auvesy</span>
<span class="t" style="left:503.6px;top:186px;letter-spacing:-0.227px;">Auvesy</span>
<span class="t" style="left:703.6px;top:186px;letter-spacing:-0.056px;">8/11/2014</span>
<span class="t" style="left:803.6px;top:186px;letter-spacing:0.388px;">&lt;All&gt;</span>
<span class="t" style="left:928.6px;top:186px;letter-spacing:0.249px;">&lt;None&gt;</span>
<svg class="i" style="left:302px;top:207px" width="16" height="14" viewBox="0 0 16 14" ><rect x="0.5" y="0.5" width="15" height="10" fill="#fff" stroke="#86714f"/><path d="M0.5 10.5 V0.5 H15" stroke="#a5937a" fill="none"/><rect x="1.5" y="1.5" width="13" height="8" fill="none" stroke="#ece6dc"/><path d="M3 3.5 H13" stroke="#757dd2" /><path d="M6 5.5 H11" stroke="#c3c7ee"/><path d="M3 7.5 H6" stroke="#9aa1e0"/><path d="M8.1 11.4 L7.8 14.1 H9.5 L10.5 12.8 L11.5 14.1 H13.2 L12.9 11.4 Z" fill="#1f63e0"/><circle cx="10.5" cy="9.6" r="2.35" fill="#efb224" stroke="#c4820c" stroke-width="0.8"/><path d="M9.4 8.8 L10.5 10.1 L11.6 8.8" stroke="#fbd75e" stroke-width="0.9" fill="none"/></svg>
<span class="t" style="left:320px;top:205px;letter-spacing:-0.227px;">Auvesy</span>
<span class="t" style="left:503.6px;top:205px;letter-spacing:-0.227px;">Auvesy</span>
<span class="t" style="left:703.6px;top:205px;letter-spacing:-0.155px;">10/1/2015</span>
<span class="t" style="left:803.6px;top:205px;letter-spacing:0.388px;">&lt;All&gt;</span>
<span class="t" style="left:928.6px;top:205px;letter-spacing:0.249px;">&lt;None&gt;</span>
<svg class="i" style="left:302px;top:226px" width="16" height="14" viewBox="0 0 16 14" ><rect x="0.5" y="0.5" width="15" height="10" fill="#fff" stroke="#86714f"/><path d="M0.5 10.5 V0.5 H15" stroke="#a5937a" fill="none"/><rect x="1.5" y="1.5" width="13" height="8" fill="none" stroke="#ece6dc"/><path d="M3 3.5 H13" stroke="#757dd2" /><path d="M6 5.5 H11" stroke="#c3c7ee"/><path d="M3 7.5 H6" stroke="#9aa1e0"/><path d="M8.1 11.4 L7.8 14.1 H9.5 L10.5 12.8 L11.5 14.1 H13.2 L12.9 11.4 Z" fill="#1f63e0"/><circle cx="10.5" cy="9.6" r="2.35" fill="#efb224" stroke="#c4820c" stroke-width="0.8"/><path d="M9.4 8.8 L10.5 10.1 L11.6 8.8" stroke="#fbd75e" stroke-width="0.9" fill="none"/></svg>
<span class="t" style="left:320px;top:224px;letter-spacing:-0.227px;">Auvesy</span>
<span class="t" style="left:503.6px;top:224px;letter-spacing:-0.227px;">Auvesy</span>
<span class="t" style="left:703.6px;top:224px;letter-spacing:-0.155px;">8/26/2015</span>
<span class="t" style="left:803.6px;top:224px;letter-spacing:0.388px;">&lt;All&gt;</span>
<span class="t" style="left:928.6px;top:224px;letter-spacing:0.249px;">&lt;None&gt;</span>
<svg class="i" style="left:302px;top:243px" width="16" height="16" viewBox="0 0 16 16" ><rect x="2.5" y="3.5" width="13" height="9" fill="#fff" stroke="#86714f"/><path d="M2.5 12.5 V3.5 H15" stroke="#a5937a" fill="none"/><path d="M7 5.5 H13" stroke="#757dd2" /><path d="M8 7.5 H11" stroke="#c3c7ee"/><path d="M5.5 9.5 H7" stroke="#9aa1e0"/><path d="M8.1 13.4 L7.8 16.1 H9.5 L10.5 14.8 L11.5 16.1 H13.2 L12.9 13.4 Z" fill="#1f63e0"/><circle cx="10.5" cy="11.6" r="2.35" fill="#efb224" stroke="#c4820c" stroke-width="0.8"/><path d="M9.4 10.8 L10.5 12.1 L11.6 10.8" stroke="#fbd75e" stroke-width="0.9" fill="none"/><path d="M3.3 5.4 V10.4 M3.3 8 H5 M3.3 10 H4.8" stroke="#6b5320" stroke-width="2.1" fill="none" stroke-linecap="round"/><ellipse cx="3.5" cy="3.2" rx="3.2" ry="2.9" fill="#f3c84b" stroke="#2c210c" stroke-width="0.9"/><ellipse cx="3.5" cy="2.5" rx="1.1" ry="0.8" fill="#2c210c"/><path d="M3.3 5.6 V10.2 M3.3 8 H4.8 M3.3 9.9 H4.6" stroke="#e8ae24" stroke-width="1.4" fill="none"/><path d="M2.8 5.8 V9.6" stroke="#fbe6a0" stroke-width="0.6"/><path d="M1.6 2.6 Q2.2 1.2 3.6 1.1" stroke="#fff3c4" stroke-width="0.7" fill="none"/></svg>
<span class="t" style="left:320px;top:243px;letter-spacing:-0.372px;">AUVESY GmbH &amp; Co KG Proxy ...</span>
<span class="t" style="left:503.6px;top:243px;letter-spacing:-0.407px;">AUVESY GmbH &amp; Co KG Proxy CA</span>
<span class="t" style="left:703.6px;top:243px;letter-spacing:-0.206px;">12/31/2037</span>
<span class="t" style="left:803.6px;top:243px;letter-spacing:0.388px;">&lt;All&gt;</span>
<span class="t" style="left:928.6px;top:243px;letter-spacing:-0.110px;">C=de, L=Landau in ...</span>
<svg class="i" style="left:302px;top:264px" width="16" height="14" viewBox="0 0 16 14" ><rect x="0.5" y="0.5" width="15" height="10" fill="#fff" stroke="#86714f"/><path d="M0.5 10.5 V0.5 H15" stroke="#a5937a" fill="none"/><rect x="1.5" y="1.5" width="13" height="8" fill="none" stroke="#ece6dc"/><path d="M3 3.5 H13" stroke="#757dd2" /><path d="M6 5.5 H11" stroke="#c3c7ee"/><path d="M3 7.5 H6" stroke="#9aa1e0"/><path d="M8.1 11.4 L7.8 14.1 H9.5 L10.5 12.8 L11.5 14.1 H13.2 L12.9 11.4 Z" fill="#1f63e0"/><circle cx="10.5" cy="9.6" r="2.35" fill="#efb224" stroke="#c4820c" stroke-width="0.8"/><path d="M9.4 8.8 L10.5 10.1 L11.6 8.8" stroke="#fbd75e" stroke-width="0.9" fill="none"/></svg>
<span class="t" style="left:320px;top:262px;letter-spacing:-0.379px;">AUVESY GmbH &amp; Co KG WebA...</span>
<span class="t" style="left:503.6px;top:262px;letter-spacing:-0.352px;">AUVESY GmbH &amp; Co KG WebAd...</span>
<span class="t" style="left:703.6px;top:262px;letter-spacing:-0.206px;">12/31/2037</span>
<span class="t" style="left:803.6px;top:262px;letter-spacing:0.388px;">&lt;All&gt;</span>
<span class="t" style="left:928.6px;top:262px;letter-spacing:0.249px;">&lt;None&gt;</span>
<svg class="i" style="left:302px;top:283px" width="16" height="14" viewBox="0 0 16 14" ><rect x="0.5" y="0.5" width="15" height="10" fill="#fff" stroke="#86714f"/><path d="M0.5 10.5 V0.5 H15" stroke="#a5937a" fill="none"/><rect x="1.5" y="1.5" width="13" height="8" fill="none" stroke="#ece6dc"/><path d="M3 3.5 H13" stroke="#757dd2" /><path d="M6 5.5 H11" stroke="#c3c7ee"/><path d="M3 7.5 H6" stroke="#9aa1e0"/><path d="M8.1 11.4 L7.8 14.1 H9.5 L10.5 12.8 L11.5 14.1 H13.2 L12.9 11.4 Z" fill="#1f63e0"/><circle cx="10.5" cy="9.6" r="2.35" fill="#efb224" stroke="#c4820c" stroke-width="0.8"/><path d="M9.4 8.8 L10.5 10.1 L11.6 8.8" stroke="#fbd75e" stroke-width="0.9" fill="none"/></svg>
<span class="t" style="left:320px;top:281px;letter-spacing:-1.211px;">AUVESYROOTCA</span>
<span class="t" style="left:503.6px;top:281px;letter-spacing:-1.211px;">AUVESYROOTCA</span>
<span class="t" style="left:703.6px;top:281px;letter-spacing:-0.155px;">6/28/2030</span>
<span class="t" style="left:803.6px;top:281px;letter-spacing:0.388px;">&lt;All&gt;</span>
<span class="t" style="left:928.6px;top:281px;letter-spacing:0.249px;">&lt;None&gt;</span>
<svg class="i" style="left:302px;top:302px" width="16" height="14" viewBox="0 0 16 14" ><rect x="0.5" y="0.5" width="15" height="10" fill="#fff" stroke="#86714f"/><path d="M0.5 10.5 V0.5 H15" stroke="#a5937a" fill="none"/><rect x="1.5" y="1.5" width="13" height="8" fill="none" stroke="#ece6dc"/><path d="M3 3.5 H13" stroke="#757dd2" /><path d="M6 5.5 H11" stroke="#c3c7ee"/><path d="M3 7.5 H6" stroke="#9aa1e0"/><path d="M8.1 11.4 L7.8 14.1 H9.5 L10.5 12.8 L11.5 14.1 H13.2 L12.9 11.4 Z" fill="#1f63e0"/><circle cx="10.5" cy="9.6" r="2.35" fill="#efb224" stroke="#c4820c" stroke-width="0.8"/><path d="M9.4 8.8 L10.5 10.1 L11.6 8.8" stroke="#fbd75e" stroke-width="0.9" fill="none"/></svg>
<span class="t" style="left:320px;top:300px;letter-spacing:-0.130px;">Baltimore CyberTrust Root</span>
<span class="t" style="left:503.6px;top:300px;letter-spacing:-0.130px;">Baltimore CyberTrust Root</span>
<span class="t" style="left:703.6px;top:300px;letter-spacing:-0.155px;">5/12/2025</span>
<span class="t" style="left:803.6px;top:300px;letter-spacing:0.137px;">Client Authenticati...</span>
<span class="t" style="left:928.6px;top:300px;letter-spacing:-0.038px;">DigiCert Baltimore ...</span>
<svg class="i" style="left:302px;top:321px" width="16" height="14" viewBox="0 0 16 14" ><rect x="0.5" y="0.5" width="15" height="10" fill="#fff" stroke="#86714f"/><path d="M0.5 10.5 V0.5 H15" stroke="#a5937a" fill="none"/><rect x="1.5" y="1.5" width="13" height="8" fill="none" stroke="#ece6dc"/><path d="M3 3.5 H13" stroke="#757dd2" /><path d="M6 5.5 H11" stroke="#c3c7ee"/><path d="M3 7.5 H6" stroke="#9aa1e0"/><path d="M8.1 11.4 L7.8 14.1 H9.5 L10.5 12.8 L11.5 14.1 H13.2 L12.9 11.4 Z" fill="#1f63e0"/><circle cx="10.5" cy="9.6" r="2.35" fill="#efb224" stroke="#c4820c" stroke-width="0.8"/><path d="M9.4 8.8 L10.5 10.1 L11.6 8.8" stroke="#fbd75e" stroke-width="0.9" fill="none"/></svg>
<span class="t" style="left:320px;top:319px;letter-spacing:-0.103px;">Certum Trusted Network CA</span>
<span class="t" style="left:503.6px;top:319px;letter-spacing:-0.103px;">Certum Trusted Network CA</span>
<span class="t" style="left:703.6px;top:319px;letter-spacing:-0.206px;">12/31/2029</span>
<span class="t" style="left:803.6px;top:319px;letter-spacing:0.137px;">Client Authenticati...</span>
<span class="t" style="left:928.6px;top:319px;letter-spacing:-0.123px;">Certum Trusted Net...</span>
<svg class="i" style="left:302px;top:340px" width="16" height="14" viewBox="0 0 16 14" ><rect x="0.5" y="0.5" width="15" height="10" fill="#fff" stroke="#86714f"/><path d="M0.5 10.5 V0.5 H15" stroke="#a5937a" fill="none"/><rect x="1.5" y="1.5" width="13" height="8" fill="none" stroke="#ece6dc"/><path d="M3 3.5 H13" stroke="#757dd2" /><path d="M6 5.5 H11" stroke="#c3c7ee"/><path d="M3 7.5 H6" stroke="#9aa1e0"/><path d="M8.1 11.4 L7.8 14.1 H9.5 L10.5 12.8 L11.5 14.1 H13.2 L12.9 11.4 Z" fill="#1f63e0"/><circle cx="10.5" cy="9.6" r="2.35" fill="#efb224" stroke="#c4820c" stroke-width="0.8"/><path d="M9.4 8.8 L10.5 10.1 L11.6 8.8" stroke="#fbd75e" stroke-width="0.9" fill="none"/></svg>
<span class="t" style="left:320px;top:338px;letter-spacing:-0.105px;">Certum Trusted Network CA 2</span>
<span class="t" style="left:503.6px;top:338px;letter-spacing:-0.105px;">Certum Trusted Network CA 2</span>
<span class="t" style="left:703.6px;top:338px;letter-spacing:-0.155px;">10/6/2046</span>
<span class="t" style="left:803.6px;top:338px;letter-spacing:0.137px;">Client Authenticati...</span>
<span class="t" style="left:928.6px;top:338px;letter-spacing:-0.123px;">Certum Trusted Net...</span>
<svg class="i" style="left:302px;top:359px" width="16" height="14" viewBox="0 0 16 14" ><rect x="0.5" y="0.5" width="15" height="10" fill="#fff" stroke="#86714f"/><path d="M0.5 10.5 V0.5 H15" stroke="#a5937a" fill="none"/><rect x="1.5" y="1.5" width="13" height="8" fill="none" stroke="#ece6dc"/><path d="M3 3.5 H13" stroke="#757dd2" /><path d="M6 5.5 H11" stroke="#c3c7ee"/><path d="M3 7.5 H6" stroke="#9aa1e0"/><path d="M8.1 11.4 L7.8 14.1 H9.5 L10.5 12.8 L11.5 14.1 H13.2 L12.9 11.4 Z" fill="#1f63e0"/><circle cx="10.5" cy="9.6" r="2.35" fill="#efb224" stroke="#c4820c" stroke-width="0.8"/><path d="M9.4 8.8 L10.5 10.1 L11.6 8.8" stroke="#fbd75e" stroke-width="0.9" fill="none"/></svg>
<span class="t" style="left:320px;top:357px;letter-spacing:-0.141px;">Class 3 Public Primary Certificat...</span>
<span class="t" style="left:503.6px;top:357px;letter-spacing:-0.115px;">Class 3 Public Primary Certificatio...</span>
<span class="t" style="left:703.6px;top:357px;letter-spacing:-0.090px;">8/1/2028</span>
<span class="t" style="left:803.6px;top:357px;letter-spacing:0.137px;">Client Authenticati...</span>
<span class="t" style="left:928.6px;top:357px;letter-spacing:-0.363px;">VeriSign Class 3 Pu...</span>
<svg class="i" style="left:302px;top:378px" width="16" height="14" viewBox="0 0 16 14" ><rect x="0.5" y="0.5" width="15" height="10" fill="#fff" stroke="#86714f"/><path d="M0.5 10.5 V0.5 H15" stroke="#a5937a" fill="none"/><rect x="1.5" y="1.5" width="13" height="8" fill="none" stroke="#ece6dc"/><path d="M3 3.5 H13" stroke="#757dd2" /><path d="M6 5.5 H11" stroke="#c3c7ee"/><path d="M3 7.5 H6" stroke="#9aa1e0"/><path d="M8.1 11.4 L7.8 14.1 H9.5 L10.5 12.8 L11.5 14.1 H13.2 L12.9 11.4 Z" fill="#1f63e0"/><circle cx="10.5" cy="9.6" r="2.35" fill="#efb224" stroke="#c4820c" stroke-width="0.8"/><path d="M9.4 8.8 L10.5 10.1 L11.6 8.8" stroke="#fbd75e" stroke-width="0.9" fill="none"/></svg>
<span class="t" style="left:320px;top:376px;letter-spacing:-0.134px;">COMODO RSA Certification Au...</span>
<span class="t" style="left:503.6px;top:376px;letter-spacing:-0.091px;">COMODO RSA Certification Auth...</span>
<span class="t" style="left:703.6px;top:376px;letter-spacing:-0.155px;">1/18/2038</span>
<span class="t" style="left:803.6px;top:376px;letter-spacing:0.137px;">Client Authenticati...</span>
<span class="t" style="left:928.6px;top:376px;letter-spacing:-0.046px;">Sectigo (formerly C...</span>
<svg class="i" style="left:302px;top:397px" width="16" height="14" viewBox="0 0 16 14" ><rect x="0.5" y="0.5" width="15" height="10" fill="#fff" stroke="#86714f"/><path d="M0.5 10.5 V0.5 H15" stroke="#a5937a" fill="none"/><rect x="1.5" y="1.5" width="13" height="8" fill="none" stroke="#ece6dc"/><path d="M3 3.5 H13" stroke="#757dd2" /><path d="M6 5.5 H11" stroke="#c3c7ee"/><path d="M3 7.5 H6" stroke="#9aa1e0"/><path d="M8.1 11.4 L7.8 14.1 H9.5 L10.5 12.8 L11.5 14.1 H13.2 L12.9 11.4 Z" fill="#1f63e0"/><circle cx="10.5" cy="9.6" r="2.35" fill="#efb224" stroke="#c4820c" stroke-width="0.8"/><path d="M9.4 8.8 L10.5 10.1 L11.6 8.8" stroke="#fbd75e" stroke-width="0.9" fill="none"/></svg>
<span class="t" style="left:320px;top:395px;letter-spacing:-0.062px;">Copyright (c) 1997 Microsoft C...</span>
<span class="t" style="left:503.6px;top:395px;letter-spacing:-0.018px;">Copyright (c) 1997 Microsoft Corp.</span>
<span class="t" style="left:703.6px;top:395px;letter-spacing:-0.206px;">12/30/1999</span>
<span class="t" style="left:803.6px;top:395px;letter-spacing:0.010px;">Time Stamping</span>
<span class="t" style="left:928.6px;top:395px;">Microsoft Timesta...</span>
<svg class="i" style="left:302px;top:416px" width="16" height="14" viewBox="0 0 16 14" ><rect x="0.5" y="0.5" width="15" height="10" fill="#fff" stroke="#86714f"/><path d="M0.5 10.5 V0.5 H15" stroke="#a5937a" fill="none"/><rect x="1.5" y="1.5" width="13" height="8" fill="none" stroke="#ece6dc"/><path d="M3 3.5 H13" stroke="#757dd2" /><path d="M6 5.5 H11" stroke="#c3c7ee"/><path d="M3 7.5 H6" stroke="#9aa1e0"/><path d="M8.1 11.4 L7.8 14.1 H9.5 L10.5 12.8 L11.5 14.1 H13.2 L12.9 11.4 Z" fill="#1f63e0"/><circle cx="10.5" cy="9.6" r="2.35" fill="#efb224" stroke="#c4820c" stroke-width="0.8"/><path d="M9.4 8.8 L10.5 10.1 L11.6 8.8" stroke="#fbd75e" stroke-width="0.9" fill="none"/></svg>
<span class="t" style="left:320px;top:414px;letter-spacing:-0.137px;">DataManagRootCA</span>
<span class="t" style="left:503.6px;top:414px;letter-spacing:-0.137px;">DataManagRootCA</span>
<span class="t" style="left:703.6px;top:414px;letter-spacing:-0.155px;">4/28/2035</span>
<span class="t" style="left:803.6px;top:414px;letter-spacing:0.388px;">&lt;All&gt;</span>
<span class="t" style="left:928.6px;top:414px;letter-spacing:0.249px;">&lt;None&gt;</span>
<span class="t" style="left:1103.6px;top:414px;">C</span>
<svg class="i" style="left:302px;top:435px" width="16" height="14" viewBox="0 0 16 14" ><rect x="0.5" y="0.5" width="15" height="10" fill="#fff" stroke="#86714f"/><path d="M0.5 10.5 V0.5 H15" stroke="#a5937a" fill="none"/><rect x="1.5" y="1.5" width="13" height="8" fill="none" stroke="#ece6dc"/><path d="M3 3.5 H13" stroke="#757dd2" /><path d="M6 5.5 H11" stroke="#c3c7ee"/><path d="M3 7.5 H6" stroke="#9aa1e0"/><path d="M8.1 11.4 L7.8 14.1 H9.5 L10.5 12.8 L11.5 14.1 H13.2 L12.9 11.4 Z" fill="#1f63e0"/><circle cx="10.5" cy="9.6" r="2.35" fill="#efb224" stroke="#c4820c" stroke-width="0.8"/><path d="M9.4 8.8 L10.5 10.1 L11.6 8.8" stroke="#fbd75e" stroke-width="0.9" fill="none"/></svg>
<span class="t" style="left:320px;top:433px;letter-spacing:-0.137px;">DataManagRootCA</span>
<span class="t" style="left:503.6px;top:433px;letter-spacing:-0.137px;">DataManagRootCA</span>
<span class="t" style="left:703.6px;top:433px;letter-spacing:-0.090px;">4/6/2037</span>
<span class="t" style="left:803.6px;top:433px;letter-spacing:0.388px;">&lt;All&gt;</span>
<span class="t" style="left:928.6px;top:433px;letter-spacing:0.249px;">&lt;None&gt;</span>
<span class="t" style="left:1103.6px;top:433px;">C</span>
<svg class="i" style="left:302px;top:454px" width="16" height="14" viewBox="0 0 16 14" ><rect x="0.5" y="0.5" width="15" height="10" fill="#fff" stroke="#86714f"/><path d="M0.5 10.5 V0.5 H15" stroke="#a5937a" fill="none"/><rect x="1.5" y="1.5" width="13" height="8" fill="none" stroke="#ece6dc"/><path d="M3 3.5 H13" stroke="#757dd2" /><path d="M6 5.5 H11" stroke="#c3c7ee"/><path d="M3 7.5 H6" stroke="#9aa1e0"/><path d="M8.1 11.4 L7.8 14.1 H9.5 L10.5 12.8 L11.5 14.1 H13.2 L12.9 11.4 Z" fill="#1f63e0"/><circle cx="10.5" cy="9.6" r="2.35" fill="#efb224" stroke="#c4820c" stroke-width="0.8"/><path d="M9.4 8.8 L10.5 10.1 L11.6 8.8" stroke="#fbd75e" stroke-width="0.9" fill="none"/></svg>
<span class="t" style="left:320px;top:452px;letter-spacing:-0.137px;">DataManagRootCA</span>
<span class="t" style="left:503.6px;top:452px;letter-spacing:-0.137px;">DataManagRootCA</span>
<span class="t" style="left:703.6px;top:452px;letter-spacing:-0.090px;">4/6/2037</span>
<span class="t" style="left:803.6px;top:452px;letter-spacing:0.388px;">&lt;All&gt;</span>
<span class="t" style="left:928.6px;top:452px;letter-spacing:0.249px;">&lt;None&gt;</span>
<span class="t" style="left:1103.6px;top:452px;">C</span>
<svg class="i" style="left:302px;top:473px" width="16" height="14" viewBox="0 0 16 14" ><rect x="0.5" y="0.5" width="15" height="10" fill="#fff" stroke="#86714f"/><path d="M0.5 10.5 V0.5 H15" stroke="#a5937a" fill="none"/><rect x="1.5" y="1.5" width="13" height="8" fill="none" stroke="#ece6dc"/><path d="M3 3.5 H13" stroke="#757dd2" /><path d="M6 5.5 H11" stroke="#c3c7ee"/><path d="M3 7.5 H6" stroke="#9aa1e0"/><path d="M8.1 11.4 L7.8 14.1 H9.5 L10.5 12.8 L11.5 14.1 H13.2 L12.9 11.4 Z" fill="#1f63e0"/><circle cx="10.5" cy="9.6" r="2.35" fill="#efb224" stroke="#c4820c" stroke-width="0.8"/><path d="M9.4 8.8 L10.5 10.1 L11.6 8.8" stroke="#fbd75e" stroke-width="0.9" fill="none"/></svg>
<span class="t" style="left:320px;top:471px;letter-spacing:-0.137px;">DataManagRootCA</span>
<span class="t" style="left:503.6px;top:471px;letter-spacing:-0.137px;">DataManagRootCA</span>
<span class="t" style="left:703.6px;top:471px;letter-spacing:-0.155px;">4/28/2035</span>
<span class="t" style="left:803.6px;top:471px;letter-spacing:0.388px;">&lt;All&gt;</span>
<span class="t" style="left:928.6px;top:471px;letter-spacing:0.249px;">&lt;None&gt;</span>
<span class="t" style="left:1103.6px;top:471px;">C</span>
<svg class="i" style="left:302px;top:492px" width="16" height="14" viewBox="0 0 16 14" ><rect x="0.5" y="0.5" width="15" height="10" fill="#fff" stroke="#86714f"/><path d="M0.5 10.5 V0.5 H15" stroke="#a5937a" fill="none"/><rect x="1.5" y="1.5" width="13" height="8" fill="none" stroke="#ece6dc"/><path d="M3 3.5 H13" stroke="#757dd2" /><path d="M6 5.5 H11" stroke="#c3c7ee"/><path d="M3 7.5 H6" stroke="#9aa1e0"/><path d="M8.1 11.4 L7.8 14.1 H9.5 L10.5 12.8 L11.5 14.1 H13.2 L12.9 11.4 Z" fill="#1f63e0"/><circle cx="10.5" cy="9.6" r="2.35" fill="#efb224" stroke="#c4820c" stroke-width="0.8"/><path d="M9.4 8.8 L10.5 10.1 L11.6 8.8" stroke="#fbd75e" stroke-width="0.9" fill="none"/></svg>
<span class="t" style="left:320px;top:490px;letter-spacing:-0.172px;">DC1.DataManag.local</span>
<span class="t" style="left:503.6px;top:490px;letter-spacing:0.308px;">root-CA</span>
<span class="t" style="left:703.6px;top:490px;letter-spacing:-0.155px;">6/12/2014</span>
<span class="t" style="left:803.6px;top:490px;letter-spacing:0.137px;">Client Authenticati...</span>
<span class="t" style="left:928.6px;top:490px;letter-spacing:0.249px;">&lt;None&gt;</span>
<span class="t" style="left:1103.6px;top:490px;">D</span>
<svg class="i" style="left:302px;top:511px" width="16" height="14" viewBox="0 0 16 14" ><rect x="0.5" y="0.5" width="15" height="10" fill="#fff" stroke="#86714f"/><path d="M0.5 10.5 V0.5 H15" stroke="#a5937a" fill="none"/><rect x="1.5" y="1.5" width="13" height="8" fill="none" stroke="#ece6dc"/><path d="M3 3.5 H13" stroke="#757dd2" /><path d="M6 5.5 H11" stroke="#c3c7ee"/><path d="M3 7.5 H6" stroke="#9aa1e0"/><path d="M8.1 11.4 L7.8 14.1 H9.5 L10.5 12.8 L11.5 14.1 H13.2 L12.9 11.4 Z" fill="#1f63e0"/><circle cx="10.5" cy="9.6" r="2.35" fill="#efb224" stroke="#c4820c" stroke-width="0.8"/><path d="M9.4 8.8 L10.5 10.1 L11.6 8.8" stroke="#fbd75e" stroke-width="0.9" fill="none"/></svg>
<span class="t" style="left:320px;top:509px;letter-spacing:-0.207px;">DigiCert Assured ID Root CA</span>
<span class="t" style="left:503.6px;top:509px;letter-spacing:-0.207px;">DigiCert Assured ID Root CA</span>
<span class="t" style="left:703.6px;top:509px;letter-spacing:-0.056px;">11/9/2031</span>
<span class="t" style="left:803.6px;top:509px;letter-spacing:0.137px;">Client Authenticati...</span>
<span class="t" style="left:928.6px;top:509px;letter-spacing:-0.168px;">DigiCert</span>
<svg class="i" style="left:302px;top:530px" width="16" height="14" viewBox="0 0 16 14" ><rect x="0.5" y="0.5" width="15" height="10" fill="#fff" stroke="#86714f"/><path d="M0.5 10.5 V0.5 H15" stroke="#a5937a" fill="none"/><rect x="1.5" y="1.5" width="13" height="8" fill="none" stroke="#ece6dc"/><path d="M3 3.5 H13" stroke="#757dd2" /><path d="M6 5.5 H11" stroke="#c3c7ee"/><path d="M3 7.5 H6" stroke="#9aa1e0"/><path d="M8.1 11.4 L7.8 14.1 H9.5 L10.5 12.8 L11.5 14.1 H13.2 L12.9 11.4 Z" fill="#1f63e0"/><circle cx="10.5" cy="9.6" r="2.35" fill="#efb224" stroke="#c4820c" stroke-width="0.8"/><path d="M9.4 8.8 L10.5 10.1 L11.6 8.8" stroke="#fbd75e" stroke-width="0.9" fill="none"/></svg>
<span class="t" style="left:320px;top:528px;letter-spacing:-0.207px;">DigiCert Assured ID Root CA</span>
<span class="t" style="left:503.6px;top:528px;letter-spacing:-0.207px;">DigiCert Assured ID Root CA</span>
<span class="t" style="left:703.6px;top:528px;letter-spacing:-0.056px;">11/9/2031</span>
<span class="t" style="left:803.6px;top:528px;letter-spacing:0.388px;">&lt;All&gt;</span>
<span class="t" style="left:928.6px;top:528px;letter-spacing:0.249px;">&lt;None&gt;</span>
<svg class="i" style="left:302px;top:549px" width="16" height="14" viewBox="0 0 16 14" ><rect x="0.5" y="0.5" width="15" height="10" fill="#fff" stroke="#86714f"/><path d="M0.5 10.5 V0.5 H15" stroke="#a5937a" fill="none"/><rect x="1.5" y="1.5" width="13" height="8" fill="none" stroke="#ece6dc"/><path d="M3 3.5 H13" stroke="#757dd2" /><path d="M6 5.5 H11" stroke="#c3c7ee"/><path d="M3 7.5 H6" stroke="#9aa1e0"/><path d="M8.1 11.4 L7.8 14.1 H9.5 L10.5 12.8 L11.5 14.1 H13.2 L12.9 11.4 Z" fill="#1f63e0"/><circle cx="10.5" cy="9.6" r="2.35" fill="#efb224" stroke="#c4820c" stroke-width="0.8"/><path d="M9.4 8.8 L10.5 10.1 L11.6 8.8" stroke="#fbd75e" stroke-width="0.9" fill="none"/></svg>
<span class="t" style="left:320px;top:547px;letter-spacing:-0.166px;">DigiCert Global Root CA</span>
<span class="t" style="left:503.6px;top:547px;letter-spacing:-0.166px;">DigiCert Global Root CA</span>
<span class="t" style="left:703.6px;top:547px;letter-spacing:-0.056px;">11/9/2031</span>
<span class="t" style="left:803.6px;top:547px;letter-spacing:0.137px;">Client Authenticati...</span>
<span class="t" style="left:928.6px;top:547px;letter-spacing:-0.168px;">DigiCert</span>
<svg class="i" style="left:302px;top:568px" width="16" height="14" viewBox="0 0 16 14" ><rect x="0.5" y="0.5" width="15" height="10" fill="#fff" stroke="#86714f"/><path d="M0.5 10.5 V0.5 H15" stroke="#a5937a" fill="none"/><rect x="1.5" y="1.5" width="13" height="8" fill="none" stroke="#ece6dc"/><path d="M3 3.5 H13" stroke="#757dd2" /><path d="M6 5.5 H11" stroke="#c3c7ee"/><path d="M3 7.5 H6" stroke="#9aa1e0"/><path d="M8.1 11.4 L7.8 14.1 H9.5 L10.5 12.8 L11.5 14.1 H13.2 L12.9 11.4 Z" fill="#1f63e0"/><circle cx="10.5" cy="9.6" r="2.35" fill="#efb224" stroke="#c4820c" stroke-width="0.8"/><path d="M9.4 8.8 L10.5 10.1 L11.6 8.8" stroke="#fbd75e" stroke-width="0.9" fill="none"/></svg>
<span class="t" style="left:320px;top:566px;letter-spacing:-0.180px;">DigiCert Global Root G2</span>
<span class="t" style="left:503.6px;top:566px;letter-spacing:-0.180px;">DigiCert Global Root G2</span>
<span class="t" style="left:703.6px;top:566px;letter-spacing:-0.155px;">1/15/2038</span>
<span class="t" style="left:803.6px;top:566px;letter-spacing:0.137px;">Client Authenticati...</span>
<span class="t" style="left:928.6px;top:566px;letter-spacing:-0.164px;">DigiCert Global Roo...</span>
<svg class="i" style="left:302px;top:587px" width="16" height="14" viewBox="0 0 16 14" ><rect x="0.5" y="0.5" width="15" height="10" fill="#fff" stroke="#86714f"/><path d="M0.5 10.5 V0.5 H15" stroke="#a5937a" fill="none"/><rect x="1.5" y="1.5" width="13" height="8" fill="none" stroke="#ece6dc"/><path d="M3 3.5 H13" stroke="#757dd2" /><path d="M6 5.5 H11" stroke="#c3c7ee"/><path d="M3 7.5 H6" stroke="#9aa1e0"/><path d="M8.1 11.4 L7.8 14.1 H9.5 L10.5 12.8 L11.5 14.1 H13.2 L12.9 11.4 Z" fill="#1f63e0"/><circle cx="10.5" cy="9.6" r="2.35" fill="#efb224" stroke="#c4820c" stroke-width="0.8"/><path d="M9.4 8.8 L10.5 10.1 L11.6 8.8" stroke="#fbd75e" stroke-width="0.9" fill="none"/></svg>
<span class="t" style="left:320px;top:585px;letter-spacing:-0.180px;">DigiCert Global Root G3</span>
<span class="t" style="left:503.6px;top:585px;letter-spacing:-0.180px;">DigiCert Global Root G3</span>
<span class="t" style="left:703.6px;top:585px;letter-spacing:-0.155px;">1/15/2038</span>
<span class="t" style="left:803.6px;top:585px;letter-spacing:0.137px;">Client Authenticati...</span>
<span class="t" style="left:928.6px;top:585px;letter-spacing:-0.164px;">DigiCert Global Roo...</span>
<svg class="i" style="left:302px;top:606px" width="16" height="14" viewBox="0 0 16 14" ><rect x="0.5" y="0.5" width="15" height="10" fill="#fff" stroke="#86714f"/><path d="M0.5 10.5 V0.5 H15" stroke="#a5937a" fill="none"/><rect x="1.5" y="1.5" width="13" height="8" fill="none" stroke="#ece6dc"/><path d="M3 3.5 H13" stroke="#757dd2" /><path d="M6 5.5 H11" stroke="#c3c7ee"/><path d="M3 7.5 H6" stroke="#9aa1e0"/><path d="M8.1 11.4 L7.8 14.1 H9.5 L10.5 12.8 L11.5 14.1 H13.2 L12.9 11.4 Z" fill="#1f63e0"/><circle cx="10.5" cy="9.6" r="2.35" fill="#efb224" stroke="#c4820c" stroke-width="0.8"/><path d="M9.4 8.8 L10.5 10.1 L11.6 8.8" stroke="#fbd75e" stroke-width="0.9" fill="none"/></svg>
<span class="t" style="left:320px;top:604px;letter-spacing:-0.220px;">DigiCert High Assurance EV Ro...</span>
<span class="t" style="left:503.6px;top:604px;letter-spacing:-0.179px;">DigiCert High Assurance EV Root ...</span>
<span class="t" style="left:703.6px;top:604px;letter-spacing:-0.056px;">11/9/2031</span>
<span class="t" style="left:803.6px;top:604px;letter-spacing:0.137px;">Client Authenticati...</span>
<span class="t" style="left:928.6px;top:604px;letter-spacing:-0.168px;">DigiCert</span>
<svg class="i" style="left:302px;top:625px" width="16" height="14" viewBox="0 0 16 14" ><rect x="0.5" y="0.5" width="15" height="10" fill="#fff" stroke="#86714f"/><path d="M0.5 10.5 V0.5 H15" stroke="#a5937a" fill="none"/><rect x="1.5" y="1.5" width="13" height="8" fill="none" stroke="#ece6dc"/><path d="M3 3.5 H13" stroke="#757dd2" /><path d="M6 5.5 H11" stroke="#c3c7ee"/><path d="M3 7.5 H6" stroke="#9aa1e0"/><path d="M8.1 11.4 L7.8 14.1 H9.5 L10.5 12.8 L11.5 14.1 H13.2 L12.9 11.4 Z" fill="#1f63e0"/><circle cx="10.5" cy="9.6" r="2.35" fill="#efb224" stroke="#c4820c" stroke-width="0.8"/><path d="M9.4 8.8 L10.5 10.1 L11.6 8.8" stroke="#fbd75e" stroke-width="0.9" fill="none"/></svg>
<span class="t" style="left:320px;top:623px;letter-spacing:-0.226px;">DigiCert Trusted Root G4</span>
<span class="t" style="left:503.6px;top:623px;letter-spacing:-0.226px;">DigiCert Trusted Root G4</span>
<span class="t" style="left:703.6px;top:623px;letter-spacing:-0.155px;">1/15/2038</span>
<span class="t" style="left:803.6px;top:623px;letter-spacing:0.137px;">Client Authenticati...</span>
<span class="t" style="left:928.6px;top:623px;letter-spacing:-0.194px;">DigiCert Trusted Ro...</span>
<svg class="i" style="left:302px;top:644px" width="16" height="14" viewBox="0 0 16 14" ><rect x="0.5" y="0.5" width="15" height="10" fill="#fff" stroke="#86714f"/><path d="M0.5 10.5 V0.5 H15" stroke="#a5937a" fill="none"/><rect x="1.5" y="1.5" width="13" height="8" fill="none" stroke="#ece6dc"/><path d="M3 3.5 H13" stroke="#757dd2" /><path d="M6 5.5 H11" stroke="#c3c7ee"/><path d="M3 7.5 H6" stroke="#9aa1e0"/><path d="M8.1 11.4 L7.8 14.1 H9.5 L10.5 12.8 L11.5 14.1 H13.2 L12.9 11.4 Z" fill="#1f63e0"/><circle cx="10.5" cy="9.6" r="2.35" fill="#efb224" stroke="#c4820c" stroke-width="0.8"/><path d="M9.4 8.8 L10.5 10.1 L11.6 8.8" stroke="#fbd75e" stroke-width="0.9" fill="none"/></svg>
<span class="t" style="left:320px;top:642px;letter-spacing:-0.226px;">DigiCert Trusted Root G4</span>
<span class="t" style="left:503.6px;top:642px;letter-spacing:-0.226px;">DigiCert Trusted Root G4</span>
<span class="t" style="left:703.6px;top:642px;letter-spacing:-0.155px;">1/15/2038</span>
<span class="t" style="left:803.6px;top:642px;letter-spacing:0.388px;">&lt;All&gt;</span>
<span class="t" style="left:928.6px;top:642px;letter-spacing:0.249px;">&lt;None&gt;</span>
<svg class="i" style="left:302px;top:663px" width="16" height="14" viewBox="0 0 16 14" ><rect x="0.5" y="0.5" width="15" height="10" fill="#fff" stroke="#86714f"/><path d="M0.5 10.5 V0.5 H15" stroke="#a5937a" fill="none"/><rect x="1.5" y="1.5" width="13" height="8" fill="none" stroke="#ece6dc"/><path d="M3 3.5 H13" stroke="#757dd2" /><path d="M6 5.5 H11" stroke="#c3c7ee"/><path d="M3 7.5 H6" stroke="#9aa1e0"/><path d="M8.1 11.4 L7.8 14.1 H9.5 L10.5 12.8 L11.5 14.1 H13.2 L12.9 11.4 Z" fill="#1f63e0"/><circle cx="10.5" cy="9.6" r="2.35" fill="#efb224" stroke="#c4820c" stroke-width="0.8"/><path d="M9.4 8.8 L10.5 10.1 L11.6 8.8" stroke="#fbd75e" stroke-width="0.9" fill="none"/></svg>
<span class="t" style="left:320px;top:661px;letter-spacing:-0.501px;">DST Root CA X3</span>
<span class="t" style="left:503.6px;top:661px;letter-spacing:-0.501px;">DST Root CA X3</span>
<span class="t" style="left:703.6px;top:661px;letter-spacing:-0.155px;">9/30/2021</span>
<span class="t" style="left:803.6px;top:661px;letter-spacing:0.137px;">Client Authenticati...</span>
<span class="t" style="left:928.6px;top:661px;letter-spacing:-0.501px;">DST Root CA X3</span>
<svg class="i" style="left:302px;top:682px" width="16" height="14" viewBox="0 0 16 14" ><rect x="0.5" y="0.5" width="15" height="10" fill="#fff" stroke="#86714f"/><path d="M0.5 10.5 V0.5 H15" stroke="#a5937a" fill="none"/><rect x="1.5" y="1.5" width="13" height="8" fill="none" stroke="#ece6dc"/><path d="M3 3.5 H13" stroke="#757dd2" /><path d="M6 5.5 H11" stroke="#c3c7ee"/><path d="M3 7.5 H6" stroke="#9aa1e0"/><path d="M8.1 11.4 L7.8 14.1 H9.5 L10.5 12.8 L11.5 14.1 H13.2 L12.9 11.4 Z" fill="#1f63e0"/><circle cx="10.5" cy="9.6" r="2.35" fill="#efb224" stroke="#c4820c" stroke-width="0.8"/><path d="M9.4 8.8 L10.5 10.1 L11.6 8.8" stroke="#fbd75e" stroke-width="0.9" fill="none"/></svg>
<span class="t" style="left:320px;top:680px;letter-spacing:0.028px;">Entrust Root Certification Auth...</span>
<span class="t" style="left:503.6px;top:680px;letter-spacing:0.095px;">Entrust Root Certification Authority</span>
<span class="t" style="left:703.6px;top:680px;letter-spacing:-0.117px;">11/27/2026</span>
<span class="t" style="left:803.6px;top:680px;letter-spacing:0.137px;">Client Authenticati...</span>
<span class="t" style="left:928.6px;top:680px;letter-spacing:-0.145px;">Entrust</span>
<svg class="i" style="left:302px;top:701px" width="16" height="14" viewBox="0 0 16 14" ><rect x="0.5" y="0.5" width="15" height="10" fill="#fff" stroke="#86714f"/><path d="M0.5 10.5 V0.5 H15" stroke="#a5937a" fill="none"/><rect x="1.5" y="1.5" width="13" height="8" fill="none" stroke="#ece6dc"/><path d="M3 3.5 H13" stroke="#757dd2" /><path d="M6 5.5 H11" stroke="#c3c7ee"/><path d="M3 7.5 H6" stroke="#9aa1e0"/><path d="M8.1 11.4 L7.8 14.1 H9.5 L10.5 12.8 L11.5 14.1 H13.2 L12.9 11.4 Z" fill="#1f63e0"/><circle cx="10.5" cy="9.6" r="2.35" fill="#efb224" stroke="#c4820c" stroke-width="0.8"/><path d="M9.4 8.8 L10.5 10.1 L11.6 8.8" stroke="#fbd75e" stroke-width="0.9" fill="none"/></svg>
<div class="b" style="left:298px;top:704px;width:814px;height:16px;background:#f0f0f0;"></div>
<div class="b" style="left:1112px;top:85px;width:16px;height:635px;background:#f0f0f0;"></div>
<div class="b" style="left:1128px;top:84px;width:1px;height:637px;background:#fff;"></div>
<div class="b" style="left:1119px;top:102px;width:2px;height:255px;background:#828282;"></div>
<div class="b" style="left:315px;top:711px;width:704px;height:2px;background:#808080;"></div>
<div class="b" style="left:1133px;top:83px;width:291px;height:639px;background:#fff;border-left:1px solid #a0a0a0;border-top:1px solid #a0a0a0;box-sizing:border-box;"></div>
<div class="b" style="left:1134px;top:84px;width:290px;height:637px;background:#fff;border-left:1px solid #696969;border-top:1px solid #696969;border-right:1px solid #e3e3e3;border-bottom:1px solid #e3e3e3;box-sizing:border-box;"></div>
<div class="b" style="left:1135px;top:85px;width:288px;height:20px;background:#f3f3f3;"></div>
<div class="b" style="left:1135px;top:105px;width:288px;height:1px;background:#8f8f8f;"></div>
<span class="t" style="left:1140px;top:87px;letter-spacing:-0.431px;font-weight:bold;">Actions</span>
<div class="b" style="left:1135px;top:107px;width:288px;height:25px;background:linear-gradient(#bcd3ec,#b4cce8 45%,#9bb7d7);"></div>
<span class="t" style="left:1142px;top:111px;letter-spacing:-0.086px;">Certificates</span>
<svg class="i" style="left:1407px;top:117px" width="9" height="5" viewBox="0 0 9 5" ><path d="M0 5 L4.5 0.3 L9 5 Z" fill="#000"/></svg>
<span class="t" style="left:1166.4px;top:135px;letter-spacing:0.135px;">More Actions</span>
<svg class="i" style="left:1410px;top:139px" width="5" height="9" viewBox="0 0 5 9" ><path d="M0 0 L5 4.5 L0 9 Z" fill="#000"/></svg>
<div class="b" style="left:1135px;top:161px;width:288px;height:25px;background:linear-gradient(#bcd3ec,#b4cce8 45%,#9bb7d7);"></div>
<span class="t" style="left:1142px;top:165px;letter-spacing:-0.304px;">&lt;insert_server_name&gt;</span>
<svg class="i" style="left:1407px;top:171px" width="9" height="5" viewBox="0 0 9 5" ><path d="M0 5 L4.5 0.3 L9 5 Z" fill="#000"/></svg>
<span class="t" style="left:1166.4px;top:189px;letter-spacing:0.135px;">More Actions</span>
<svg class="i" style="left:1410px;top:193px" width="5" height="9" viewBox="0 0 5 9" ><path d="M0 0 L5 4.5 L0 9 Z" fill="#000"/></svg>
<div class="b" style="left:1px;top:721px;width:292px;height:1px;background:#828790;"></div>
<div class="b" style="left:296px;top:721px;width:834px;height:1px;background:#828790;"></div>
<div class="b" style="left:1131px;top:722px;width:293px;height:1px;background:#dcdcdc;"></div>
<div class="b" style="left:1337px;top:724px;width:1px;height:19px;background:#d7d7d7;"></div>
<div class="b" style="left:1422px;top:724px;width:1px;height:19px;background:#d7d7d7;"></div>
<div class="b" style="left:0px;top:744px;width:1426px;height:1px;background:#fff;"></div>
<span class="t" style="left:3px;top:726px;letter-spacing:-0.032px;">Trusted Root Certification Authorities store contains 71 certificates.</span>
<svg class="i" style="z-index:60;left:472px;top:115px" width="13" height="20" viewBox="0 0 13 20"><path d="M0.5 0.5 V16.5 L4.2 13 L7 19.2 L9.3 18.2 L6.6 12.2 H11.8 Z" fill="#fff" stroke="#000" stroke-width="1" stroke-linejoin="miter"/></svg>
</div><div id="frame"></div>
<div class="b" style="left:0;top:8px;width:1px;height:730px;z-index:51;background:linear-gradient(#3d5d8b,#4f678c 30%,#5a6f8c 52%,#4a5468 70%,#3a414f 80%,#343a46)"></div>
<div class="b" style="left:1425px;top:8px;width:1px;height:730px;z-index:51;background:linear-gradient(#3a5a8a,#5d6985 25%,#857c7a 50%,#6a6462 75%,#2f3138)"></div>
</body></html>
